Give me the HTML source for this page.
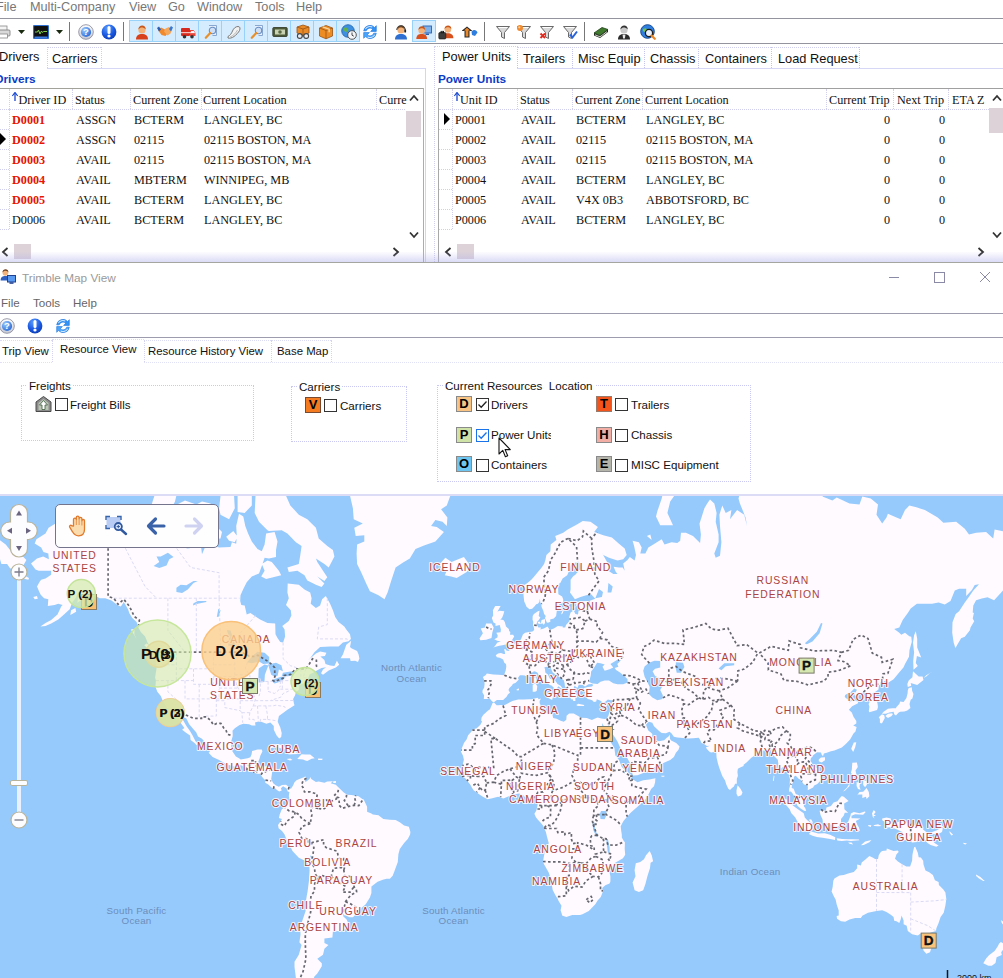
<!DOCTYPE html>
<html><head><meta charset="utf-8"><title>Trimble Map View</title>
<style>
html,body{margin:0;padding:0;background:#fff;}
#root{position:relative;width:1003px;height:978px;overflow:hidden;background:#fff;font-family:"Liberation Sans",sans-serif;}
.a{position:absolute;white-space:nowrap;}
.menu{font-size:12.7px;color:#777;line-height:16px;}
.tab{font-size:12.8px;color:#111;line-height:16px;}
.hl{position:absolute;background:#d4ecfd;border:1px solid #98d2fb;box-sizing:border-box;}
.sep{position:absolute;width:1px;background:#777;}
.hline{position:absolute;left:0;width:1003px;height:1px;background:#8c8c9c;}
.bl{font-size:11.8px;font-weight:bold;color:#0a3cc8;line-height:14px;}
.g{font-family:"Liberation Serif",serif;font-size:12.2px;color:#111;line-height:16px;}
.gr{font-family:"Liberation Serif",serif;font-size:12.2px;color:#e61400;font-weight:bold;line-height:16px;}
.s12{font-size:11.6px;color:#111;line-height:15px;}
.cb{position:absolute;width:13px;height:13px;box-sizing:border-box;border:1px solid #333;background:#fff;}
.ic{position:absolute;width:16px;height:16px;box-sizing:border-box;border:1px solid #777;font-weight:bold;font-size:13px;line-height:14px;text-align:center;color:#000;}
.gb{position:absolute;box-sizing:border-box;border:1px dotted #c8c8f2;}
.dv{position:absolute;width:0;border-left:1px dotted #d0d0ee;}
.dh{position:absolute;height:0;border-top:1px dotted #d0d0ee;}

</style></head>
<body>
<div id="root">
<div class="a menu" style="left:-4px;top:-1px">File</div>
<div class="a menu" style="left:30px;top:-1px">Multi-Company</div>
<div class="a menu" style="left:129px;top:-1px">View</div>
<div class="a menu" style="left:168px;top:-1px">Go</div>
<div class="a menu" style="left:197px;top:-1px">Window</div>
<div class="a menu" style="left:255px;top:-1px">Tools</div>
<div class="a menu" style="left:296px;top:-1px">Help</div>
<div class="hline" style="top:18px;background:#94949f"></div>
<div class="hline" style="top:43px;background:#94949f"></div>
<div class="hl" style="left:129px;top:20px;width:24px;height:22px"></div>
<div class="hl" style="left:152px;top:20px;width:24px;height:22px"></div>
<div class="hl" style="left:175px;top:20px;width:24px;height:22px"></div>
<div class="hl" style="left:198px;top:20px;width:24px;height:22px"></div>
<div class="hl" style="left:221px;top:20px;width:24px;height:22px"></div>
<div class="hl" style="left:244px;top:20px;width:24px;height:22px"></div>
<div class="hl" style="left:267px;top:20px;width:24px;height:22px"></div>
<div class="hl" style="left:290px;top:20px;width:24px;height:22px"></div>
<div class="hl" style="left:313px;top:20px;width:24px;height:22px"></div>
<div class="hl" style="left:336px;top:20px;width:24px;height:22px"></div>
<div class="hl" style="left:412px;top:20px;width:24px;height:22px"></div>
<div class="sep" style="left:69px;top:22px;height:19px"></div>
<div class="sep" style="left:123px;top:22px;height:19px"></div>
<div class="sep" style="left:385px;top:22px;height:19px"></div>
<div class="sep" style="left:484px;top:22px;height:19px"></div>
<div class="sep" style="left:584px;top:22px;height:19px"></div>
<svg class="a" style="left:-5.0px;top:23.5px" width="16" height="16" viewBox="0 0 16 16"><rect x="3" y="2" width="9" height="5" fill="#f4f4f4" stroke="#888" stroke-width="0.8"/><rect x="1" y="6" width="14" height="6" rx="1" fill="#d9d9d9" stroke="#777" stroke-width="0.8"/><rect x="3.500" y="10" width="9" height="4" fill="#fff" stroke="#888" stroke-width="0.8"/></svg>
<svg class="a" style="left:18.0px;top:30.0px" width="7" height="4" viewBox="0 0 7 4"><path d="M0 0h7l-3.500 4z" fill="#1a2a10"/></svg>
<svg class="a" style="left:33.0px;top:23.5px" width="16" height="16" viewBox="0 0 16 16"><rect x="0.500" y="1.500" width="15" height="13" rx="1" fill="#111" stroke="#2f6fd0" stroke-width="1.200"/><path d="M2 8h2.500l1-2 1.500 4 1.500-3 1 1.500 1.200-1h3.300" stroke="#7fd04a" stroke-width="1" fill="none"/><rect x="1.500" y="12.500" width="13" height="1.500" fill="#3b7be0"/></svg>
<svg class="a" style="left:56.0px;top:30.0px" width="7" height="4" viewBox="0 0 7 4"><path d="M0 0h7l-3.500 4z" fill="#1a2a10"/></svg>
<svg class="a" style="left:78.0px;top:23.5px" width="16" height="16" viewBox="0 0 16 16"><defs><radialGradient id="qg" cx="35%" cy="30%" r="75%"><stop offset="0" stop-color="#9ccbff"/><stop offset="1" stop-color="#2a6ad6"/></radialGradient><linearGradient id="qr" x1="0" y1="0" x2="0" y2="1"><stop offset="0" stop-color="#ffffff"/><stop offset="1" stop-color="#c4c8d4"/></linearGradient></defs><circle cx="8" cy="8" r="7.3" fill="url(#qr)" stroke="#8e90a0" stroke-width="0.9"/><circle cx="8" cy="8" r="5.1" fill="url(#qg)"/><text x="8" y="11.4" font-size="9.5" font-weight="bold" fill="#fff" text-anchor="middle" font-family="Liberation Sans, sans-serif">?</text></svg>
<svg class="a" style="left:101.0px;top:23.5px" width="16" height="16" viewBox="0 0 16 16"><defs><radialGradient id="bg" cx="40%" cy="25%" r="80%"><stop offset="0" stop-color="#5a9cff"/><stop offset="0.6" stop-color="#1a58e0"/><stop offset="1" stop-color="#0c3cb4"/></radialGradient></defs><circle cx="8" cy="8" r="7.4" fill="url(#bg)"/><path d="M8 3.6v4.8" stroke="#fff" stroke-width="3" stroke-linecap="round"/><circle cx="8" cy="12" r="1.6" fill="#fff"/></svg>
<svg class="a" style="left:133.5px;top:23.5px" width="16" height="16" viewBox="0 0 16 16"><path d="M2 15.5c0-4 2.5-5.5 6-5.5s6 1.5 6 5.5z" fill="#d8401c"/><circle cx="8" cy="6" r="3.6" fill="#f3b27a"/><path d="M4.3 5.6c.2-3 2-4.1 3.9-4.1s3.600 1.200 3.600 4.000c-1.200-1.600-3.000-2.000-4.000-2.000s-2.500.6-3.500 2.100z" fill="#c8571a"/></svg>
<svg class="a" style="left:156.5px;top:23.5px" width="16" height="16" viewBox="0 0 16 16"><path d="M1 6l3-2.500 4 2 2.500 4-2 2.500-4-1z" fill="#f08a2c"/><path d="M15 5.500l-3-2.500-3.500 1.500-1.500 3 3.500 4 3-2z" fill="#f6a85a"/><path d="M0 4l2-1.500 2 3-2 2z" fill="#2a5fb8"/><path d="M16 3.500l-2-1.500-2 3 2 2.500z" fill="#3a78d0"/></svg>
<svg class="a" style="left:179.5px;top:23.5px" width="16" height="16" viewBox="0 0 16 16"><rect x="1" y="4" width="9" height="8" rx="1" fill="#d62a1e"/><path d="M10 6h3.500l2 3v3h-5.500z" fill="#e8483a"/><rect x="11" y="7" width="3" height="2" fill="#dfefff"/><rect x="1" y="8" width="14" height="1.200" fill="#fff" opacity=".7"/><circle cx="4.500" cy="12.800" r="1.800" fill="#333"/><circle cx="12" cy="12.800" r="1.800" fill="#333"/></svg>
<svg class="a" style="left:202.5px;top:23.5px" width="16" height="16" viewBox="0 0 16 16"><path d="M6 1.500h7.500v10h-4" fill="#e8f0fb" stroke="#7f9fcc" stroke-width="0.9"/><circle cx="9.500" cy="6.500" r="3.200" fill="#cfe0f6" stroke="#6a8fc4" stroke-width="1.100"/><path d="M7.300 9l-4.500 4.800" stroke="#e8902c" stroke-width="2.200" stroke-linecap="round"/></svg>
<svg class="a" style="left:225.5px;top:23.5px" width="16" height="16" viewBox="0 0 16 16"><path d="M2 12.500c2-1 3.500-3 4.500-5.500s3-4.500 5.500-4.500c2 0 2.500 2 1.500 4s-3.500 4.500-5.500 6-4.500 2-6 1.500z" fill="#f2f2f2" stroke="#7a7a7a" stroke-width="1"/><path d="M4 13c3-1 6-4 7.500-7" stroke="#aaa" stroke-width="0.800" fill="none"/></svg>
<svg class="a" style="left:248.5px;top:23.5px" width="16" height="16" viewBox="0 0 16 16"><path d="M6 1.500h7.500v10h-4" fill="#e8f0fb" stroke="#7f9fcc" stroke-width="0.9"/><circle cx="9.500" cy="6.500" r="3.200" fill="#cfe0f6" stroke="#6a8fc4" stroke-width="1.100"/><path d="M7.300 9l-4.500 4.800" stroke="#e8902c" stroke-width="2.200" stroke-linecap="round"/></svg>
<svg class="a" style="left:271.5px;top:23.5px" width="16" height="16" viewBox="0 0 16 16"><rect x="0.800" y="3.500" width="14.400" height="9" rx="1" fill="#4d5a3a" stroke="#2d3422" stroke-width="0.800"/><rect x="3" y="5.500" width="10" height="5" fill="#c9d3b4"/><circle cx="8" cy="8" r="1.800" fill="#5c6b46"/></svg>
<svg class="a" style="left:294.5px;top:23.5px" width="16" height="16" viewBox="0 0 16 16"><path d="M2 3l6-2 6 2v6l-6 2.500-6-2.500z" fill="#e98a28" stroke="#9a5414" stroke-width="0.800"/><path d="M2 3l6 2 6-2M8 5v6.500" stroke="#9a5414" stroke-width="0.800" fill="none"/><circle cx="4.800" cy="12" r="2.400" fill="#e9eef5" stroke="#444" stroke-width="1.100"/><circle cx="11.200" cy="12" r="2.400" fill="#e9eef5" stroke="#444" stroke-width="1.100"/><path d="M7.200 12h1.600" stroke="#444" stroke-width="1"/></svg>
<svg class="a" style="left:317.5px;top:23.5px" width="16" height="16" viewBox="0 0 16 16"><path d="M1.500 4l6.500-2.500 6.500 2.500v8l-6.500 2.800-6.500-2.800z" fill="#ee8c24" stroke="#9a5414" stroke-width="0.800"/><path d="M1.500 4l6.500 2.500 6.500-2.500M8 6.500v8.300" stroke="#9a5414" stroke-width="0.800" fill="none"/><path d="M4.700 2.800l6.500 2.500v3" stroke="#f8d39a" stroke-width="1.400" fill="none"/></svg>
<svg class="a" style="left:340.5px;top:23.5px" width="16" height="16" viewBox="0 0 16 16"><circle cx="7" cy="7" r="6.300" fill="#3f8fe0" stroke="#1f5fae" stroke-width="0.800"/><path d="M3 4c2-1 3 0 4 1s-1 3-2 3-3-2-2-4zM8 9c1.500-1 3.500 0 3 2s-2.500 2-3 .5z" fill="#62b04a"/><circle cx="11" cy="11" r="4.300" fill="#f4f6fa" stroke="#555" stroke-width="1"/><path d="M11 8.500v2.700l1.800 1" stroke="#333" stroke-width="0.900" fill="none"/></svg>
<svg class="a" style="left:362.0px;top:23.5px" width="16" height="16" viewBox="0 0 16 16"><g transform="translate(8 8) scale(1.15) translate(-8 -8)"><path d="M2.500 7a5.500 5.500 0 0 1 9.500-3l1.500-1.500v5h-5l1.800-1.800a3.300 3.300 0 0 0-5.600 1.300z" fill="#2f92f6" stroke="#1b6fd8" stroke-width="0.5"/><path d="M13.500 9a5.500 5.500 0 0 1-9.500 3l-1.500 1.500v-5h5l-1.800 1.800a3.300 3.300 0 0 0 5.600-1.300z" fill="#4aa4fa" stroke="#1b6fd8" stroke-width="0.5"/><path d="M4 5.500a4.400 4.400 0 0 1 6-1.800" stroke="#cfe6ff" stroke-width="0.9" fill="none"/><path d="M12 10.500a4.400 4.400 0 0 1-6 1.800" stroke="#cfe6ff" stroke-width="0.9" fill="none"/></g></svg>
<svg class="a" style="left:393.0px;top:23.5px" width="16" height="16" viewBox="0 0 16 16"><path d="M2 15.5c0-4 2.5-5.5 6-5.5s6 1.5 6 5.5z" fill="#2f6fd2"/><circle cx="8" cy="6" r="3.6" fill="#f3b27a"/><path d="M4.3 5.6c.2-3 2-4.1 3.9-4.1s3.600 1.200 3.600 4.000c-1.200-1.600-3.000-2.000-4.000-2.000s-2.500.6-3.500 2.100z" fill="#7a4a22"/><path d="M3.800 6a4.200 4.200 0 0 1 8.400 0" stroke="#333" stroke-width="1.100" fill="none"/><rect x="11.300" y="5.500" width="1.800" height="3" rx=".6" fill="#222"/></svg>
<svg class="a" style="left:416.0px;top:23.5px" width="16" height="16" viewBox="0 0 16 16"><rect x="7" y="2" width="8.500" height="7" fill="#7fb1ea" stroke="#2b5fae" stroke-width="0.900"/><rect x="9.500" y="9.500" width="3.500" height="1.500" fill="#2b5fae"/><g transform="translate(-1.500,1) scale(.9)"><path d="M2 15.5c0-4 2.5-5.5 6-5.5s6 1.5 6 5.5z" fill="#d8501c"/><circle cx="8" cy="6" r="3.6" fill="#f3b27a"/><path d="M4.3 5.6c.2-3 2-4.1 3.9-4.1s3.600 1.200 3.600 4.000c-1.200-1.600-3.000-2.000-4.000-2.000s-2.500.6-3.500 2.100z" fill="#c8571a"/></g></svg>
<svg class="a" style="left:438.0px;top:23.5px" width="16" height="16" viewBox="0 0 16 16"><g transform="translate(2.500,0) scale(.92)"><path d="M2 15.5c0-4 2.5-5.5 6-5.5s6 1.5 6 5.5z" fill="#d8501c"/><circle cx="8" cy="6" r="3.6" fill="#f3b27a"/><path d="M4.3 5.6c.2-3 2-4.1 3.9-4.1s3.600 1.200 3.600 4.000c-1.200-1.600-3.000-2.000-4.000-2.000s-2.500.6-3.500 2.100z" fill="#c8571a"/></g><rect x="0.800" y="8.500" width="7" height="6.500" rx="1" fill="#3d3d3d" stroke="#111" stroke-width="0.600"/><rect x="3" y="7.300" width="2.600" height="1.500" fill="none" stroke="#111" stroke-width="0.800"/></svg>
<svg class="a" style="left:462.0px;top:23.5px" width="16" height="16" viewBox="0 0 16 16"><path d="M5 2.500l5.500 4.500h-3v6.500h-5v-6.500h-3z" fill="#2a2a2a"/><path d="M5 3.800l3 2.700h-1.600v6h-2.800v-6h-1.600z" fill="#e8882a"/><path d="M9.500 7.500c2-2.500 5-2 6 1l-2.500 3.500-3-1z" fill="#2f7fe0"/></svg>
<svg class="a" style="left:494.5px;top:23.5px" width="16" height="16" viewBox="0 0 16 16"><path d="M1.500 2.500h13l-5 6v6l-3-1.500v-4.500z" fill="#d8d8d8" stroke="#6a6a6a" stroke-width="1" stroke-linejoin="round"/><path d="M3.500 3.500h9" stroke="#fff" stroke-width="1"/></svg>
<svg class="a" style="left:516.0px;top:23.5px" width="16" height="16" viewBox="0 0 16 16"><path d="M1.500 2.500h13l-5 6v6l-3-1.500v-4.500z" fill="#d8d8d8" stroke="#6a6a6a" stroke-width="1" stroke-linejoin="round"/><path d="M3.500 3.500h9" stroke="#fff" stroke-width="1"/><circle cx="4" cy="4" r="3" fill="#f08a2c"/><circle cx="3.300" cy="3.300" r="1.100" fill="#fbd0a0"/></svg>
<svg class="a" style="left:539.0px;top:23.5px" width="16" height="16" viewBox="0 0 16 16"><path d="M1.500 2.500h13l-5 6v6l-3-1.500v-4.500z" fill="#d8d8d8" stroke="#6a6a6a" stroke-width="1" stroke-linejoin="round"/><path d="M3.500 3.500h9" stroke="#fff" stroke-width="1"/><path d="M1.500 9.500l4.500 4.500M6 9.500l-4.500 4.500" stroke="#e0281c" stroke-width="1.800"/></svg>
<svg class="a" style="left:562.0px;top:23.5px" width="16" height="16" viewBox="0 0 16 16"><path d="M1.500 2.500h13l-5 6v6l-3-1.500v-4.500z" fill="#d8d8d8" stroke="#6a6a6a" stroke-width="1" stroke-linejoin="round"/><path d="M3.500 3.500h9" stroke="#fff" stroke-width="1"/><path d="M8 10.500l2.500 3 4.500-6" stroke="#2a62d8" stroke-width="2" fill="none"/></svg>
<svg class="a" style="left:593.0px;top:23.5px" width="16" height="16" viewBox="0 0 16 16"><path d="M1 9l8-5.500 6 2-8 6z" fill="#3f7a2e" stroke="#1f3f18" stroke-width="0.800"/><path d="M1 9v2.500l6 2.500 8-6v-2.500l-8 6z" fill="#1e2a1a"/><path d="M2 10.800l5 2 7-5.200" stroke="#e8e8e0" stroke-width="0.900" fill="none"/></svg>
<svg class="a" style="left:616.0px;top:23.5px" width="16" height="16" viewBox="0 0 16 16"><path d="M2 15.5c0-4 2.5-5.5 6-5.5s6 1.5 6 5.5z" fill="#2b2b2b"/><circle cx="8" cy="6" r="3.6" fill="#c9c9c9"/><path d="M4.3 5.6c.2-3 2-4.1 3.9-4.1s3.600 1.200 3.600 4.000c-1.200-1.600-3.000-2.000-4.000-2.000s-2.500.6-3.500 2.100z" fill="#333"/><path d="M6.500 10.500h3l-.6 4h-1.800z" fill="#e8e8e8"/></svg>
<svg class="a" style="left:640.0px;top:23.5px" width="16" height="16" viewBox="0 0 16 16"><circle cx="7.500" cy="7.500" r="6.800" fill="#2f7fe0" stroke="#17498f" stroke-width="1"/><path d="M3 5c2-1.500 3.500-.5 4 .5s-1 2.500-2 2.500-3-1-2-3z" fill="#6ec05a"/><circle cx="9" cy="9" r="3.600" fill="#eaf3ff" stroke="#1a1a1a" stroke-width="1.300"/><path d="M11.600 11.600l3.200 3.200" stroke="#e8882a" stroke-width="2.200" stroke-linecap="round"/></svg>
<div class="a tab" style="left:-1px;top:49px">Drivers</div>
<div class="a tab" style="left:52px;top:51px">Carriers</div>
<div class="dv" style="left:47px;top:47px;height:21px"></div>
<div class="dh" style="left:47px;top:47px;width:54px"></div>
<div class="dv" style="left:101px;top:47px;height:21px"></div>
<div class="a" style="left:47px;top:68px;width:378px;height:1px;background:#d6d6f6"></div>
<div class="a" style="left:425px;top:68px;width:1px;height:194px;background:#d4d4fa"></div>
<div class="a bl" style="left:-5px;top:72px">Drivers</div>
<div class="dv" style="left:434px;top:46px;height:216px"></div>
<div class="dh" style="left:435px;top:46px;width:83px"></div>
<div class="a tab" style="left:442px;top:49px">Power Units</div>
<div class="a tab" style="left:523px;top:51px">Trailers</div>
<div class="a tab" style="left:578px;top:51px">Misc Equip</div>
<div class="a tab" style="left:650px;top:51px">Chassis</div>
<div class="a tab" style="left:705px;top:51px">Containers</div>
<div class="a tab" style="left:778px;top:51px">Load Request</div>
<div class="dv" style="left:517px;top:47px;height:21px;border-color:#c4c4ec"></div>
<div class="dv" style="left:572px;top:47px;height:21px;border-color:#c4c4ec"></div>
<div class="dv" style="left:644px;top:47px;height:21px;border-color:#c4c4ec"></div>
<div class="dv" style="left:698px;top:47px;height:21px;border-color:#c4c4ec"></div>
<div class="dv" style="left:771px;top:47px;height:21px;border-color:#c4c4ec"></div>
<div class="dv" style="left:859px;top:47px;height:21px;border-color:#c4c4ec"></div>
<div class="dh" style="left:517px;top:47px;width:342px"></div>
<div class="a" style="left:517px;top:68px;width:486px;height:1px;background:#d6d6f6"></div>
<div class="a bl" style="left:438px;top:72px">Power Units</div>
<div class="a" style="left:0;top:88px;width:424px;height:1px;background:#a2a29a"></div>
<div class="a" style="left:423px;top:88px;width:1px;height:174px;background:#aeae9e"></div>
<div class="dh" style="left:0;top:109px;width:405px"></div>
<div class="dv" style="left:9px;top:89px;height:20px"></div>
<div class="dv" style="left:72px;top:89px;height:20px"></div>
<div class="dv" style="left:130px;top:89px;height:20px"></div>
<div class="dv" style="left:201px;top:89px;height:20px"></div>
<div class="dv" style="left:376px;top:89px;height:20px"></div>
<div class="dv" style="left:9px;top:109px;height:120px"></div>
<div class="dh" style="left:0;top:129px;width:9px"></div>
<div class="dh" style="left:0;top:149px;width:9px"></div>
<div class="dh" style="left:0;top:169px;width:9px"></div>
<div class="dh" style="left:0;top:189px;width:9px"></div>
<div class="dh" style="left:0;top:209px;width:9px"></div>
<div class="dh" style="left:0;top:229px;width:9px"></div>
<svg class="a" style="left:12px;top:92px" width="6" height="9"><path d="M3 1V9" stroke="#1846d0" stroke-width="1.3"/><path d="M0.300 4L3 0.500L5.700 4" stroke="#1846d0" stroke-width="1.200" fill="none"/></svg>
<div class="a g" style="left:18.5px;top:92px">Driver ID</div>
<div class="a g" style="left:75px;top:92px">Status</div>
<div class="a g" style="left:133px;top:92px">Current Zone</div>
<div class="a g" style="left:203px;top:92px">Current Location</div>
<div class="a g" style="left:379px;top:92px">Curre</div>
<div class="a gr" style="left:12px;top:112px">D0001</div>
<div class="a g" style="left:76px;top:112px">ASSGN</div>
<div class="a g" style="left:134px;top:112px">BCTERM</div>
<div class="a g" style="left:204px;top:112px">LANGLEY, BC</div>
<div class="a gr" style="left:12px;top:132px">D0002</div>
<div class="a g" style="left:76px;top:132px">ASSGN</div>
<div class="a g" style="left:134px;top:132px">02115</div>
<div class="a g" style="left:204px;top:132px">02115 BOSTON, MA</div>
<div class="a gr" style="left:12px;top:152px">D0003</div>
<div class="a g" style="left:76px;top:152px">AVAIL</div>
<div class="a g" style="left:134px;top:152px">02115</div>
<div class="a g" style="left:204px;top:152px">02115 BOSTON, MA</div>
<div class="a gr" style="left:12px;top:172px">D0004</div>
<div class="a g" style="left:76px;top:172px">AVAIL</div>
<div class="a g" style="left:134px;top:172px">MBTERM</div>
<div class="a g" style="left:204px;top:172px">WINNIPEG, MB</div>
<div class="a gr" style="left:12px;top:192px">D0005</div>
<div class="a g" style="left:76px;top:192px">AVAIL</div>
<div class="a g" style="left:134px;top:192px">BCTERM</div>
<div class="a g" style="left:204px;top:192px">LANGLEY, BC</div>
<div class="a g" style="left:12px;top:212px">D0006</div>
<div class="a g" style="left:76px;top:212px">AVAIL</div>
<div class="a g" style="left:134px;top:212px">BCTERM</div>
<div class="a g" style="left:204px;top:212px">LANGLEY, BC</div>
<svg class="a" style="left:0;top:133px" width="6" height="12"><path d="M0 0L6 6L0 12Z" fill="#000"/></svg>
<div class="a" style="left:406px;top:111px;width:15px;height:26px;background:#ddd2d8"></div>
<svg class="a" style="left:409px;top:94px" width="10" height="8"><path d="M1 6.5L5 2L9 6.5" stroke="#333" stroke-width="1.8" fill="none"/></svg>
<svg class="a" style="left:409px;top:231px" width="10" height="8"><path d="M1 1.5L5 6L9 1.5" stroke="#333" stroke-width="1.8" fill="none"/></svg>
<div class="a" style="left:14px;top:244px;width:17px;height:15px;background:#ddd2d8"></div>
<svg class="a" style="left:1px;top:247px" width="8" height="10"><path d="M6.5 1L2 5L6.5 9" stroke="#333" stroke-width="1.8" fill="none"/></svg>
<svg class="a" style="left:392px;top:247px" width="8" height="10"><path d="M1.5 1L6 5L1.5 9" stroke="#333" stroke-width="1.8" fill="none"/></svg>
<div class="a" style="left:438px;top:88px;width:565px;height:1px;background:#a0a0a0"></div>
<div class="a" style="left:438px;top:88px;width:1px;height:174px;background:#a8a8a8"></div>
<div class="dh" style="left:439px;top:109px;width:550px"></div>
<div class="dv" style="left:452px;top:89px;height:20px"></div>
<div class="dv" style="left:517px;top:89px;height:20px"></div>
<div class="dv" style="left:572px;top:89px;height:20px"></div>
<div class="dv" style="left:642px;top:89px;height:20px"></div>
<div class="dv" style="left:826px;top:89px;height:20px"></div>
<div class="dv" style="left:893px;top:89px;height:20px"></div>
<div class="dv" style="left:948px;top:89px;height:20px"></div>
<div class="dv" style="left:452px;top:109px;height:120px"></div>
<div class="dh" style="left:439px;top:129px;width:13px"></div>
<div class="dh" style="left:439px;top:149px;width:13px"></div>
<div class="dh" style="left:439px;top:169px;width:13px"></div>
<div class="dh" style="left:439px;top:189px;width:13px"></div>
<div class="dh" style="left:439px;top:209px;width:13px"></div>
<div class="dh" style="left:439px;top:229px;width:13px"></div>
<svg class="a" style="left:454px;top:92px" width="6" height="9"><path d="M3 1V9" stroke="#1846d0" stroke-width="1.3"/><path d="M0.300 4L3 0.500L5.700 4" stroke="#1846d0" stroke-width="1.200" fill="none"/></svg>
<div class="a g" style="left:460px;top:92px">Unit ID</div>
<div class="a g" style="left:520px;top:92px">Status</div>
<div class="a g" style="left:575px;top:92px">Current Zone</div>
<div class="a g" style="left:645px;top:92px">Current Location</div>
<div class="a g" style="left:829px;top:92px">Current Trip</div>
<div class="a g" style="left:897px;top:92px">Next Trip</div>
<div class="a g" style="left:952px;top:92px">ETA Z</div>
<div class="a g" style="left:455px;top:112px">P0001</div>
<div class="a g" style="left:521px;top:112px">AVAIL</div>
<div class="a g" style="left:576px;top:112px">BCTERM</div>
<div class="a g" style="left:646px;top:112px">LANGLEY, BC</div>
<div class="a g" style="left:884px;top:112px">0</div>
<div class="a g" style="left:939px;top:112px">0</div>
<div class="a g" style="left:455px;top:132px">P0002</div>
<div class="a g" style="left:521px;top:132px">AVAIL</div>
<div class="a g" style="left:576px;top:132px">02115</div>
<div class="a g" style="left:646px;top:132px">02115 BOSTON, MA</div>
<div class="a g" style="left:884px;top:132px">0</div>
<div class="a g" style="left:939px;top:132px">0</div>
<div class="a g" style="left:455px;top:152px">P0003</div>
<div class="a g" style="left:521px;top:152px">AVAIL</div>
<div class="a g" style="left:576px;top:152px">02115</div>
<div class="a g" style="left:646px;top:152px">02115 BOSTON, MA</div>
<div class="a g" style="left:884px;top:152px">0</div>
<div class="a g" style="left:939px;top:152px">0</div>
<div class="a g" style="left:455px;top:172px">P0004</div>
<div class="a g" style="left:521px;top:172px">AVAIL</div>
<div class="a g" style="left:576px;top:172px">BCTERM</div>
<div class="a g" style="left:646px;top:172px">LANGLEY, BC</div>
<div class="a g" style="left:884px;top:172px">0</div>
<div class="a g" style="left:939px;top:172px">0</div>
<div class="a g" style="left:455px;top:192px">P0005</div>
<div class="a g" style="left:521px;top:192px">AVAIL</div>
<div class="a g" style="left:576px;top:192px">V4X 0B3</div>
<div class="a g" style="left:646px;top:192px">ABBOTSFORD, BC</div>
<div class="a g" style="left:884px;top:192px">0</div>
<div class="a g" style="left:939px;top:192px">0</div>
<div class="a g" style="left:455px;top:212px">P0006</div>
<div class="a g" style="left:521px;top:212px">AVAIL</div>
<div class="a g" style="left:576px;top:212px">BCTERM</div>
<div class="a g" style="left:646px;top:212px">LANGLEY, BC</div>
<div class="a g" style="left:884px;top:212px">0</div>
<div class="a g" style="left:939px;top:212px">0</div>
<svg class="a" style="left:444px;top:113px" width="6" height="12"><path d="M0 0L6 6L0 12Z" fill="#000"/></svg>
<div class="a" style="left:989px;top:108px;width:14px;height:25px;background:#ddd2d8"></div>
<svg class="a" style="left:992px;top:94px" width="10" height="8"><path d="M1 6.5L5 2L9 6.5" stroke="#333" stroke-width="1.8" fill="none"/></svg>
<svg class="a" style="left:992px;top:231px" width="10" height="8"><path d="M1 1.5L5 6L9 1.5" stroke="#333" stroke-width="1.8" fill="none"/></svg>
<div class="a" style="left:457px;top:244px;width:17px;height:15px;background:#ddd2d8"></div>
<svg class="a" style="left:444px;top:247px" width="8" height="10"><path d="M6.5 1L2 5L6.5 9" stroke="#333" stroke-width="1.8" fill="none"/></svg>
<svg class="a" style="left:977px;top:247px" width="8" height="10"><path d="M1.5 1L6 5L1.5 9" stroke="#333" stroke-width="1.8" fill="none"/></svg>
<div class="a" style="left:0;top:252px;width:1003px;height:10px;background:linear-gradient(rgba(190,190,250,0.04),rgba(170,170,235,0.42))"></div>
<div class="hline" style="top:262px;background:#a6a6a0"></div>
<div class="a" style="left:22px;top:270px;font-size:11.8px;color:#9a9a9a;line-height:16px">Trimble Map View</div>
<svg class="a" style="left:885px;top:268px" width="110" height="18"><g stroke="#8a8aa6" stroke-width="1" fill="none"><path d="M4 9.5H14"/><rect x="49.5" y="4.5" width="10" height="10"/><path d="M95 4L105 14M105 4L95 14"/></g></svg>
<div class="a" style="left:1px;top:295px;font-size:11.6px;color:#666;line-height:15px">File</div>
<div class="a" style="left:33px;top:295px;font-size:11.6px;color:#666;line-height:15px">Tools</div>
<div class="a" style="left:73px;top:295px;font-size:11.6px;color:#666;line-height:15px">Help</div>
<div class="hline" style="top:313px;background:#9c9cae"></div>
<div class="hline" style="top:337px;background:#9c9cae"></div>
<svg class="a" style="left:-1.5px;top:318.0px" width="16" height="16" viewBox="0 0 16 16"><defs><radialGradient id="qg" cx="35%" cy="30%" r="75%"><stop offset="0" stop-color="#9ccbff"/><stop offset="1" stop-color="#2a6ad6"/></radialGradient><linearGradient id="qr" x1="0" y1="0" x2="0" y2="1"><stop offset="0" stop-color="#ffffff"/><stop offset="1" stop-color="#c4c8d4"/></linearGradient></defs><circle cx="8" cy="8" r="7.3" fill="url(#qr)" stroke="#8e90a0" stroke-width="0.9"/><circle cx="8" cy="8" r="5.1" fill="url(#qg)"/><text x="8" y="11.4" font-size="9.5" font-weight="bold" fill="#fff" text-anchor="middle" font-family="Liberation Sans, sans-serif">?</text></svg>
<svg class="a" style="left:27.0px;top:318.0px" width="16" height="16" viewBox="0 0 16 16"><defs><radialGradient id="bg" cx="40%" cy="25%" r="80%"><stop offset="0" stop-color="#5a9cff"/><stop offset="0.6" stop-color="#1a58e0"/><stop offset="1" stop-color="#0c3cb4"/></radialGradient></defs><circle cx="8" cy="8" r="7.4" fill="url(#bg)"/><path d="M8 3.6v4.8" stroke="#fff" stroke-width="3" stroke-linecap="round"/><circle cx="8" cy="12" r="1.6" fill="#fff"/></svg>
<svg class="a" style="left:55.0px;top:318.0px" width="16" height="16" viewBox="0 0 16 16"><g transform="translate(8 8) scale(1.15) translate(-8 -8)"><path d="M2.500 7a5.500 5.500 0 0 1 9.500-3l1.500-1.500v5h-5l1.800-1.800a3.300 3.300 0 0 0-5.600 1.300z" fill="#2f92f6" stroke="#1b6fd8" stroke-width="0.5"/><path d="M13.500 9a5.500 5.500 0 0 1-9.500 3l-1.500 1.500v-5h5l-1.800 1.800a3.300 3.300 0 0 0 5.600-1.300z" fill="#4aa4fa" stroke="#1b6fd8" stroke-width="0.5"/><path d="M4 5.500a4.400 4.400 0 0 1 6-1.800" stroke="#cfe6ff" stroke-width="0.9" fill="none"/><path d="M12 10.500a4.400 4.400 0 0 1-6 1.800" stroke="#cfe6ff" stroke-width="0.9" fill="none"/></g></svg>
<svg class="a" style="left:0.0px;top:269.0px" width="16" height="16" viewBox="0 0 16 16"><g transform="translate(-1,-1) scale(.8)"><path d="M2 15.5c0-4 2.5-5.5 6-5.5s6 1.5 6 5.5z" fill="#2f5fc0"/><circle cx="8" cy="6" r="3.6" fill="#f3b27a"/><path d="M4.3 5.6c.2-3 2-4.1 3.9-4.1s3.600 1.200 3.600 4.000c-1.200-1.600-3.000-2.000-4.000-2.000s-2.500.6-3.500 2.100z" fill="#6a3a1a"/></g><rect x="7.500" y="6.500" width="8" height="6.500" fill="#5a9af0" stroke="#1f3f8f" stroke-width="1"/><rect x="9.500" y="13.300" width="4" height="1.500" fill="#1f3f8f"/></svg>
<svg class="a" style="left:498px;top:437px" width="14" height="22" viewBox="0 0 14 22"><path d="M1 1v16l3.800-3.600 2.600 6.300 2.300-1-2.600-6.100h5.200z" fill="#fff" stroke="#111" stroke-width="1.100" stroke-linejoin="round"/></svg>
<div class="a" style="left:2px;top:344px;font-size:11.4px;color:#111;line-height:15px">Trip View</div>
<div class="a" style="left:60px;top:342px;font-size:11.4px;color:#111;line-height:15px">Resource View</div>
<div class="a" style="left:148px;top:344px;font-size:11.4px;color:#111;line-height:15px">Resource History View</div>
<div class="a" style="left:277px;top:344px;font-size:11.4px;color:#111;line-height:15px">Base Map</div>
<div class="dh" style="left:0;top:340px;width:52px;border-color:#dcdcf4"></div>
<div class="dh" style="left:52px;top:339px;width:92px;border-color:#dcdcf4"></div>
<div class="dh" style="left:144px;top:340px;width:187px;border-color:#dcdcf4"></div>
<div class="dv" style="left:52px;top:340px;height:22px;border-color:#d4d4f0"></div>
<div class="dv" style="left:144px;top:340px;height:22px;border-color:#d4d4f0"></div>
<div class="dv" style="left:271px;top:340px;height:22px;border-color:#d4d4f0"></div>
<div class="dv" style="left:331px;top:340px;height:22px;border-color:#d4d4f0"></div>
<div class="dh" style="left:0;top:362px;width:52px;border-color:#e0e0f6"></div>
<div class="dh" style="left:144px;top:362px;width:859px;border-color:#e0e0f6"></div>
<div class="gb" style="left:21px;top:385px;width:233px;height:56px"></div>
<div class="a s12" style="left:27px;top:378px;background:#fff;padding:0 2px">Freights</div>
<div class="gb" style="left:291px;top:386px;width:116px;height:56px"></div>
<div class="a s12" style="left:297px;top:379px;background:#fff;padding:0 2px">Carriers</div>
<div class="gb" style="left:437px;top:385px;width:314px;height:97px"></div>
<div class="a s12" style="left:443px;top:378px;background:#fff;padding:0 2px">Current Resources&nbsp; Location</div>
<svg class="a" style="left:35px;top:396px" width="17" height="16"><path d="M1 6L8.5 0.5L16 6V15.5H1Z" fill="#8c8c8c" stroke="#4a4a4a" stroke-width="1"/><path d="M3.5 7L8.5 3L13.5 7V14H3.5Z" fill="#b9c6b4"/><path d="M8.5 4.5L12.5 9H10V13.5H7V9H4.5Z" fill="#fff" stroke="#3c5a3c" stroke-width="0.8"/></svg>
<div class="cb" style="left:55px;top:398px"></div>
<div class="a s12" style="left:70px;top:397px">Freight Bills</div>
<div class="ic" style="left:305px;top:397px;background:#f47b20;border-color:#7a4a30">V</div>
<div class="cb" style="left:324px;top:399px"></div>
<div class="a s12" style="left:340px;top:398px">Carriers</div>
<div class="ic" style="left:456px;top:396px;background:#f9c384;border-color:#8a8a8a">D</div>
<div class="cb" style="left:476px;top:398px"></div><svg class="a" style="left:476px;top:398px" width="13" height="13"><path d="M2.5 6.5L5.2 9.3L10.5 3.5" stroke="#222" stroke-width="1.3" fill="none"/></svg>
<div class="a s12" style="left:491px;top:397px">Drivers</div>
<div class="ic" style="left:456px;top:427px;background:#cfe3a8;border-color:#8a8a8a">P</div>
<div class="cb" style="left:476px;top:429px;border-color:#1a73e8"></div><svg class="a" style="left:476px;top:429px" width="13" height="13"><path d="M2.5 6.5L5.2 9.3L10.5 3.5" stroke="#1a73e8" stroke-width="1.3" fill="none"/></svg>
<div class="a s12" style="left:491px;top:427px;width:60px;overflow:hidden">Power Units</div>
<div class="ic" style="left:456px;top:456px;background:#6ec6f0;border-color:#8a8a8a">O</div>
<div class="cb" style="left:476px;top:459px"></div>
<div class="a s12" style="left:491px;top:457px">Containers</div>
<div class="ic" style="left:596px;top:396px;background:#f2541b;border-color:#9a7a6a">T</div>
<div class="cb" style="left:615px;top:398px"></div>
<div class="a s12" style="left:631px;top:397px">Trailers</div>
<div class="ic" style="left:596px;top:427px;background:#f2aea4;border-color:#8a8a8a">H</div>
<div class="cb" style="left:615px;top:429px"></div>
<div class="a s12" style="left:631px;top:427px">Chassis</div>
<div class="ic" style="left:596px;top:456px;background:#b4b4aa;border-color:#8a8a8a">E</div>
<div class="cb" style="left:615px;top:459px"></div>
<div class="a s12" style="left:631px;top:457px">MISC Equipment</div>
<!--CURSOR-->
<div class="a" style="left:0;top:494px;width:1003px;height:2px;background:#dcdcf6"></div>
<svg class="a" style="left:0;top:496px" width="1003" height="482" viewBox="0 0 1003 482">
<rect width="1003" height="482" fill="#96cafc"/>
<path d="M31.0 67.4L37.0 62.5L43.2 60.4L48.9 63.2L48.3 57.5L43.5 56.1L41.2 51.6L34.7 47.5L36.4 43.2L45.5 37.6L48.6 31.8L64.0 22.3L76.8 27.6L88.2 31.0L102.4 33.5L108.1 37.2L120.9 43.2L128.0 38.4L130.9 38.8L140.8 34.3L145.1 30.1L153.6 38.4L159.3 36.0L165.0 36.0L176.4 43.2L182.1 51.3L187.8 52.4L196.3 50.9L200.6 47.1L202.0 58.2L204.9 51.6L207.7 44.0L213.4 50.1L219.1 51.6L230.5 50.9L231.9 46.3L236.2 47.8L236.8 40.0L236.2 30.1L239.0 17.8L243.3 20.5L245.3 30.1L248.1 37.6L251.8 45.5L257.5 53.1L261.8 55.3L264.6 48.6L266.1 37.6L274.6 36.0L277.5 45.5L276.0 53.9L276.0 61.1L268.9 62.5L264.6 61.8L261.8 70.1L259.0 77.4L251.8 80.6L246.7 86.2L243.3 92.9L240.5 99.3L240.2 105.0L241.3 108.9L244.7 109.4L246.7 118.5L250.4 116.9L260.1 123.6L267.5 127.1L275.2 127.6L275.5 138.2L277.5 141.9L280.3 146.1L283.1 146.5L285.1 140.6L284.6 133.5L282.3 130.1L288.8 125.1L291.4 119.5L290.8 114.3L286.0 108.9L288.8 102.2L287.4 96.4L287.7 87.5L298.8 88.7L304.5 93.5L310.2 96.4L311.6 102.2L310.7 107.8L315.9 112.1L320.1 109.4L322.1 103.3L325.8 99.9L330.1 107.8L332.9 114.3L335.2 121.0L338.6 126.1L344.3 130.5L346.3 133.5L350.0 138.2L350.9 142.9L348.6 145.2L342.9 146.5L338.6 150.5L330.1 150.5L320.1 151.0L314.4 156.2L310.2 162.2L307.3 165.1L311.6 161.3L315.9 157.5L320.1 155.4L326.4 156.7L325.0 160.1L320.4 160.5L324.4 163.9L325.5 168.0L330.1 169.6L334.4 170.0L336.9 164.7L339.2 168.8L335.8 171.6L328.7 174.4L323.0 178.8L321.0 177.2L323.0 173.6L326.1 171.2L321.6 172.0L318.7 173.6L313.0 176.8L309.6 178.4L308.2 181.9L307.6 183.4L310.2 185.3L307.3 186.5L303.1 187.6L298.8 189.5L298.8 193.9L295.9 196.1L295.1 199.3L293.1 202.9L294.0 207.8L294.5 209.2L291.4 211.3L287.4 213.7L282.0 217.8L278.9 220.1L277.7 225.7L280.3 231.6L281.7 237.0L281.2 241.1L279.2 242.4L276.6 239.5L273.8 233.8L273.8 230.0L270.3 226.4L266.4 227.7L261.2 225.7L257.5 225.7L255.0 226.4L255.5 229.6L251.8 229.6L249.0 228.3L243.3 227.7L239.6 229.0L234.8 232.2L232.5 234.8L232.8 239.8L231.1 245.8L231.1 251.0L232.5 255.6L235.9 260.4L239.0 262.2L240.7 263.4L247.6 262.2L250.4 261.3L251.6 258.3L252.1 255.0L257.5 253.5L261.8 253.5L262.4 255.6L260.4 259.5L259.5 262.8L258.4 265.5L256.7 270.2L260.4 270.5L264.6 270.2L270.3 270.5L272.6 272.8L271.8 278.7L271.2 283.0L273.2 287.3L276.0 289.6L278.9 290.8L282.0 289.1L286.0 288.8L289.1 291.1L287.7 295.4L286.6 292.5L283.1 290.2L280.9 292.2L281.7 294.5L279.2 295.4L276.9 293.9L275.5 292.5L273.5 293.1L271.5 291.6L268.3 288.5L265.2 286.8L265.5 284.5L263.2 282.2L260.7 279.0L259.8 278.1L256.1 277.5L253.3 276.3L249.0 275.8L244.7 271.4L241.9 269.6L239.0 269.3L234.8 270.8L230.5 269.6L225.1 267.5L219.1 264.0L212.6 261.0L208.6 256.8L209.7 255.9L209.7 253.5L206.6 248.3L202.0 242.7L198.0 240.5L196.3 236.4L193.5 233.2L189.2 228.3L186.4 222.4L182.7 220.8L182.7 223.4L186.4 230.0L189.8 234.8L192.6 239.5L195.5 245.2L198.0 247.6L196.6 249.2L194.6 247.0L190.6 243.9L190.1 239.5L186.4 237.0L182.1 233.8L184.4 231.9L179.8 225.7L177.6 220.8L175.8 217.8L172.4 213.7L166.5 211.6L162.5 204.3L160.8 200.1L157.3 195.7L155.4 190.6L155.9 184.6L155.1 181.5L156.5 172.8L156.5 168.0L154.5 158.8L159.3 159.7L160.8 162.6L161.0 158.4L158.8 154.9L154.2 151.9L148.0 147.4L145.1 140.6L140.8 135.9L138.6 132.0L136.6 126.1L132.3 122.1L129.5 117.4L128.0 113.2L123.8 106.1L120.9 110.5L118.1 109.4L111.5 104.4L105.3 102.2L99.6 102.2L94.7 99.3L91.0 96.4L86.8 99.3L84.2 102.2L77.4 106.7L78.2 99.3L82.5 95.3L78.2 96.4L75.4 102.2L72.5 106.1L69.7 113.2L64.0 118.5L58.3 123.6L51.2 127.6L45.5 130.1L40.4 130.5L45.5 127.1L51.2 124.1L54.0 121.5L57.5 118.5L61.2 110.5L62.6 108.9L58.3 107.8L54.6 108.9L47.8 110.0L48.3 103.3L44.1 102.2L40.7 98.8L39.0 95.3L37.0 90.5L39.8 85.6L41.2 83.8L45.5 82.5L51.2 78.7L51.2 74.8L46.9 74.8L38.7 74.8L35.5 73.5ZM289.1 291.1L290.8 293.1L293.1 289.4L294.5 286.2L296.5 284.2L298.2 283.6L304.5 281.0L305.3 280.3L306.5 282.4L304.8 284.5L305.6 285.9L307.3 284.8L309.6 283.0L310.2 281.0L311.3 283.0L315.9 285.9L318.7 285.6L324.4 286.8L327.3 285.6L332.9 285.3L330.7 287.3L335.8 288.8L338.6 291.6L343.8 296.5L347.2 298.8L351.4 299.1L358.6 300.2L362.3 303.0L363.7 303.6L367.1 310.7L367.1 315.8L371.4 317.5L372.8 318.6L378.5 319.2L383.3 322.9L389.9 323.7L395.6 324.0L399.8 326.3L404.1 329.4L408.9 330.8L410.4 336.0L410.1 338.5L407.8 343.1L404.1 347.1L399.8 352.9L398.4 358.2L397.8 366.1L394.7 374.5L392.7 379.7L389.9 382.7L386.5 382.7L382.8 383.7L377.6 385.8L371.4 390.5L371.4 397.1L369.9 401.6L365.7 408.2L361.1 412.2L357.1 417.2L352.9 421.3L349.5 421.3L345.8 419.6L343.2 418.9L343.2 420.3L346.6 423.4L348.0 426.6L345.8 432.3L341.5 434.8L332.9 435.5L332.4 441.4L324.4 442.5L324.4 447.0L328.4 449.0L324.4 452.8L323.0 458.8L317.3 462.8L321.8 467.3L321.8 470.3L317.3 477.5L314.4 480.6L313.0 484.2L313.0 488.7L295.9 488.7L295.9 481.9L294.5 471.1L294.5 465.7L298.8 458.8L301.6 449.0L299.4 446.3L300.5 438.8L300.2 429.4L301.4 427.6L305.6 414.9L305.9 404.9L306.5 401.6L307.6 395.2L309.0 384.6L309.6 374.2L309.3 369.1L306.5 366.4L304.5 364.6L298.8 361.7L292.5 355.0L290.0 350.0L285.7 341.4L284.6 338.5L282.0 335.1L278.6 332.2L278.0 329.1L280.3 325.7L282.0 322.9L278.9 322.0L279.7 318.6L280.3 316.9L281.7 313.5L285.1 310.7L290.0 304.8L288.8 300.2L289.4 295.9L287.7 295.4ZM348.6 -13.1L344.3 -7.7L350.0 -0.4L352.9 12.3L353.7 23.2L362.8 27.6L354.3 31.8L355.7 40.0L364.3 39.2L364.3 45.5L357.1 48.6L356.6 57.5L357.1 68.1L361.4 76.7L366.2 87.5L369.9 95.3L378.5 99.3L384.5 103.3L387.6 96.4L391.3 84.4L395.6 71.5L402.7 66.7L409.8 62.5L415.5 53.1L424.0 49.4L435.4 45.5L443.9 36.0L436.8 31.0L431.1 30.1L435.4 24.1L442.5 25.8L446.8 30.1L447.4 21.4L441.1 13.2L446.8 9.4L451.1 -2.5L455.3 -13.1L348.6 -13.1ZM439.7 68.1L445.4 61.8L451.6 66.0L458.2 63.2L463.9 61.1L468.1 66.7L470.7 71.5L466.7 76.1L456.7 81.9L451.1 80.6L444.8 79.3L446.8 74.8L441.1 72.1ZM157.9 158.8L152.2 156.7L144.3 149.2L146.5 147.6L153.1 151.0L157.1 155.4ZM136.6 142.9L130.9 133.5L134.6 133.0L134.3 138.2ZM70.3 119.0L76.2 115.8L75.4 112.1L71.1 114.3ZM33.3 101.1L37.0 99.9L37.8 102.8L34.7 103.3ZM20.7 81.9L28.4 83.8L29.0 81.9L24.2 79.6ZM340.6 162.2L342.9 158.4L346.3 148.8L351.2 144.7L350.0 151.0L351.4 152.3L357.1 154.9L358.6 158.4L359.4 162.6L358.0 165.9L355.1 164.7L350.6 165.1L350.0 162.2ZM267.5 252.2L270.3 249.5L274.6 248.3L280.3 248.6L284.6 250.7L288.8 252.8L294.0 255.3L298.2 257.4L297.4 258.1L288.3 258.4L289.7 256.2L286.0 253.5L280.3 252.2L276.0 250.4L271.8 251.9L268.9 252.5ZM297.4 262.8L301.6 258.3L305.3 258.6L310.2 258.6L314.7 262.2L311.6 262.8L307.3 264.9L305.3 264.6L303.1 263.4L297.7 263.1ZM286.6 263.1L290.3 262.5L292.5 264.0L289.7 264.6ZM318.1 262.5L322.7 262.8L322.1 264.0L318.1 264.0ZM333.2 285.3L336.1 285.0L335.8 287.1L333.2 287.1ZM153.6 17.8L150.8 11.3L155.1 -2.5L159.3 -13.1L179.3 -13.1L175.0 5.5L169.3 16.9L165.0 22.3L159.3 25.0ZM176.4 30.1L173.6 21.4L175.0 9.4L185.0 4.6L196.3 8.5L202.0 5.5L210.6 7.5L210.6 14.1L212.0 25.8L222.0 36.0L220.5 42.4L210.6 43.2L202.0 44.8L187.8 46.3L179.3 40.8L175.0 32.7ZM226.2 40.8L233.3 35.1L237.6 40.8L234.8 46.3L229.1 44.8ZM219.1 12.3L222.0 -13.1L233.3 -13.1L234.8 12.3L229.1 23.2L220.5 18.7ZM237.6 16.0L237.6 -13.1L251.8 -13.1L251.8 9.4L244.7 16.9ZM256.1 -13.1L254.7 16.9L259.0 25.8L267.5 34.3L268.9 35.1L281.7 34.3L287.4 37.6L295.9 46.3L301.6 50.1L300.2 59.7L298.8 68.1L287.4 71.5L288.8 76.1L297.4 74.8L304.5 79.3L307.3 84.4L315.9 88.7L321.6 91.1L324.4 87.5L317.3 80.6L324.4 85.0L327.3 81.2L323.0 74.8L317.3 66.0L315.9 62.5L324.4 68.1L328.7 71.5L334.4 60.4L332.9 53.9L327.3 50.1L318.7 42.4L315.9 31.8L307.3 23.2L298.8 18.7L290.3 9.4L280.3 -13.1ZM261.8 68.1L267.5 64.6L271.8 66.0L278.9 74.8L281.2 79.3L273.2 81.2L266.1 83.1L261.2 80.6L264.6 74.8ZM182.1 -13.1L176.4 -5.6L190.6 -4.5L207.7 -7.7L210.6 -13.1ZM582.8 25.0L590.5 25.8L597.9 31.0L594.2 36.0L603.3 39.2L611.9 41.6L619.0 47.8L624.7 52.4L626.7 59.0L623.2 63.2L617.5 64.6L609.0 61.8L603.3 59.0L601.9 56.8L604.7 61.8L608.2 68.1L608.4 74.8L613.3 78.0L617.5 78.0L615.6 75.4L613.6 70.8L619.0 71.5L622.7 71.5L624.7 74.8L623.2 67.4L627.5 63.9L629.8 61.1L634.6 64.6L636.0 59.0L634.1 50.1L632.6 44.8L638.9 46.3L641.7 51.6L640.3 57.5L645.4 57.5L648.3 51.6L651.7 49.4L661.7 43.2L664.5 48.6L671.6 46.3L677.3 47.1L680.2 44.8L681.0 36.8L685.9 36.8L693.0 40.0L700.1 47.1L700.9 38.4L699.5 27.6L701.5 21.4L704.4 12.3L707.2 7.5L710.0 3.6L714.3 7.5L716.6 16.9L715.7 25.8L718.6 38.4L718.6 46.3L714.3 57.5L715.7 61.8L720.0 59.7L721.4 46.3L720.0 30.1L719.4 18.7L722.3 9.4L725.7 16.9L731.4 14.1L730.0 23.2L737.1 14.1L744.2 18.7L747.0 30.1L745.6 21.4L739.9 7.5L738.5 2.6L742.8 -13.1L828.2 -13.1L822.5 0.6L832.4 4.6L836.7 1.6L849.5 7.5L859.5 8.5L862.3 0.6L870.8 2.6L878.0 8.5L876.5 18.7L882.2 27.6L886.5 21.4L887.9 17.8L896.5 21.4L900.7 23.2L905.0 14.1L909.3 9.4L916.4 11.3L924.9 14.1L937.7 21.4L943.4 26.7L956.2 25.8L964.8 32.7L969.0 38.4L976.1 36.8L986.1 36.0L993.2 42.4L994.6 33.5L1001.8 35.1L1010.3 36.8L1021.7 42.4L1027.4 46.3L1027.4 74.9L1021.7 71.5L1017.4 74.2L1014.6 73.5L1016.0 83.0L1019.7 90.1L1010.3 92.0L1004.6 92.7L1000.3 97.6L994.1 104.3L987.5 101.3L981.8 102.5L976.1 104.3L973.3 109.6L972.7 116.4L973.9 117.0L972.7 122.5L974.2 125.2L970.5 131.6L969.9 134.2L964.8 140.8L961.1 142.3L955.4 152.1L953.7 146.8L952.2 136.8L952.5 126.3L955.7 118.1L959.1 115.3L964.8 106.6L969.0 100.7L973.3 94.5L979.0 88.2L974.7 88.9L971.9 93.9L966.2 100.1L966.2 92.7L959.1 92.7L954.8 94.5L950.5 104.9L944.8 108.4L938.6 106.6L932.0 107.8L923.5 107.8L916.9 107.8L910.7 112.4L907.8 117.0L902.7 124.1L899.3 131.6L894.2 133.1L899.3 136.8L901.3 138.8L905.0 136.8L909.3 140.3L911.3 140.8L911.8 145.8L909.5 154.0L909.0 160.7L905.0 167.9L903.6 171.3L897.9 178.1L893.6 183.3L888.5 186.4L885.1 184.8L881.7 187.1L878.8 189.8L878.5 193.6L874.3 196.4L872.5 197.1L872.3 199.3L874.8 201.9L877.4 206.7L878.0 210.9L877.1 214.0L873.7 215.0L869.4 216.3L868.8 214.9L869.4 210.7L868.6 207.9L869.7 205.8L865.7 204.6L864.3 203.1L865.7 201.0L865.1 198.1L863.4 196.6L859.5 197.6L855.2 200.0L854.3 197.8L855.8 196.0L856.9 193.8L854.3 192.6L850.9 195.9L849.8 196.3L845.2 199.1L844.7 200.9L847.8 203.5L848.6 204.2L849.5 206.4L852.9 204.0L854.9 204.7L858.0 205.5L858.0 207.3L852.1 210.3L848.9 213.7L851.8 216.5L853.5 220.7L856.3 225.1L856.3 227.4L853.2 229.6L856.6 231.0L855.5 235.5L853.5 237.4L850.1 243.4L845.8 248.0L841.8 251.6L834.4 254.5L831.0 255.3L826.7 256.8L823.9 257.6L823.0 260.3L821.6 258.5L821.0 256.6L817.6 256.3L816.8 256.5L813.4 258.9L810.8 262.5L810.5 264.8L812.8 268.5L815.9 271.5L817.6 272.7L819.6 277.5L820.5 279.5L820.8 283.3L820.2 285.0L817.3 287.9L814.2 289.5L813.1 291.5L807.7 294.2L807.9 290.8L806.8 289.1L804.0 288.4L802.5 286.4L801.4 284.3L798.3 282.5L796.6 280.4L795.4 279.8L794.0 280.7L793.7 282.7L792.9 286.4L792.0 288.4L791.7 291.9L793.7 292.8L794.3 294.5L795.7 298.0L798.3 298.9L800.5 300.9L803.1 303.6L804.0 306.7L803.7 307.8L804.0 310.7L805.1 311.8L806.2 314.7L804.8 314.9L803.7 314.6L800.3 312.3L797.7 310.0L796.0 307.1L794.9 303.1L794.9 300.2L793.7 299.4L792.6 297.6L790.9 295.6L789.2 295.8L789.2 292.7L790.0 289.8L789.7 287.5L790.0 282.9L788.6 278.2L787.7 274.7L787.2 270.8L785.5 269.3L783.5 270.8L780.6 272.8L777.5 272.1L778.3 267.7L777.8 263.8L773.8 259.8L772.1 257.7L771.2 255.8L770.7 253.1L768.4 252.1L767.0 253.9L764.1 254.4L761.3 255.0L759.8 254.6L757.6 255.2L757.0 257.6L756.1 259.1L753.6 260.3L751.3 261.7L746.5 266.4L743.6 268.7L743.6 269.9L740.2 271.6L737.9 272.7L737.4 275.9L737.9 279.7L736.8 282.9L736.8 287.8L735.1 287.7L733.9 290.6L732.0 292.0L730.0 293.9L728.3 292.7L726.3 288.4L725.1 284.6L722.3 279.9L719.4 272.3L718.0 267.8L716.6 261.8L716.3 257.3L716.3 255.2L715.7 252.1L714.9 253.3L714.6 255.8L711.5 256.6L709.8 255.9L707.5 253.8L705.8 251.6L709.8 249.8L706.9 250.1L704.4 248.2L701.5 246.9L700.1 243.7L698.7 241.8L693.0 242.3L686.7 242.5L683.0 242.1L677.3 241.4L673.9 240.8L671.6 237.6L669.6 235.7L665.9 237.3L661.7 237.0L658.8 234.8L654.0 230.3L652.3 226.7L648.9 225.7L647.7 226.7L646.0 228.7L646.9 231.2L648.3 234.5L650.8 236.4L652.3 238.0L652.3 241.1L654.0 243.3L654.0 241.1L655.1 239.2L656.3 241.7L656.0 243.9L658.8 245.2L664.2 244.2L666.8 241.7L668.8 240.2L669.9 238.6L669.9 242.7L671.1 244.5L676.2 247.0L679.6 250.4L678.5 253.8L675.9 256.8L673.9 261.0L670.2 264.0L663.4 267.0L658.0 269.3L649.1 274.3L644.6 276.6L637.5 279.3L633.2 279.5L632.3 277.8L631.5 273.4L630.9 268.7L627.5 262.5L626.4 260.7L621.0 253.5L617.5 245.5L615.3 242.0L613.3 238.9L611.0 235.4L608.4 233.2L609.0 228.3L607.0 233.8L605.0 232.5L602.2 227.0L602.2 230.0L605.6 235.7L608.7 242.7L610.4 245.8L614.4 251.9L615.3 259.2L619.0 264.0L621.8 271.1L623.8 272.8L628.1 276.3L630.9 278.7L632.6 280.1L630.6 283.0L632.3 283.0L637.5 286.2L643.2 284.2L649.4 283.6L655.4 282.2L655.1 286.2L654.0 290.2L651.1 293.1L647.4 300.8L644.6 304.5L638.3 310.1L630.4 316.9L625.8 322.3L623.5 324.9L622.4 327.1L620.7 330.3L621.2 335.1L621.8 338.5L621.8 341.4L623.8 345.1L624.9 346.3L624.7 352.9L625.2 358.8L623.0 362.3L614.4 367.3L612.7 370.0L608.7 373.0L609.9 378.1L610.4 380.3L610.4 385.5L609.6 387.4L605.3 389.2L602.2 392.1L603.0 395.2L600.8 401.0L597.6 404.6L595.3 408.2L588.8 414.9L582.5 418.3L580.0 418.9L572.3 418.9L566.3 421.0L562.1 419.6L561.8 417.9L560.6 414.2L561.5 409.8L558.6 404.9L557.5 402.6L556.1 400.4L552.7 394.0L551.8 388.9L550.7 382.4L548.7 376.6L547.0 373.6L543.6 367.6L543.0 365.5L544.1 359.3L545.0 354.4L547.5 351.8L548.7 347.1L547.0 340.8L545.8 335.7L544.4 333.1L543.8 331.4L543.0 329.4L540.7 326.8L537.9 323.7L535.9 321.2L534.4 317.8L536.2 314.7L536.7 313.0L537.3 310.4L537.6 307.6L536.7 304.8L534.7 303.0L533.0 302.8L529.3 303.3L526.8 303.6L524.8 301.1L523.6 299.4L519.1 297.6L516.2 297.9L512.8 298.5L508.8 300.2L503.4 302.5L498.0 300.8L492.3 302.2L487.5 303.3L482.9 300.8L478.7 297.9L476.7 296.2L473.8 294.5L471.8 291.6L470.4 288.8L467.3 285.0L465.0 281.9L461.9 280.4L462.2 277.2L459.6 273.7L462.4 269.9L463.9 263.7L463.0 259.8L460.9 255.6L461.9 251.9L464.1 246.7L466.7 243.3L468.1 239.2L471.3 235.7L472.7 233.5L476.7 232.2L480.4 228.7L482.1 225.4L481.2 224.7L481.5 221.8L483.2 219.1L487.8 214.7L490.0 213.3L492.6 207.1L494.3 206.8L496.6 209.2L498.3 209.2L501.1 208.9L503.7 209.6L507.7 207.5L510.8 205.7L513.1 204.7L518.2 203.6L523.9 203.6L529.0 203.3L531.6 203.3L537.6 201.8L538.7 203.3L541.0 202.6L539.6 205.0L539.6 207.1L540.7 209.2L540.1 210.9L538.1 213.7L540.4 214.0L542.1 216.1L547.0 217.1L552.4 218.8L553.2 222.1L556.6 222.8L560.6 224.7L563.8 225.7L566.3 223.7L566.6 219.8L569.2 217.4L573.7 217.4L577.7 219.8L581.1 221.8L586.8 222.1L591.9 224.1L594.5 222.8L597.6 221.4L601.3 222.4L604.7 223.1L606.7 222.4L608.4 219.8L609.0 217.4L610.4 213.7L611.3 211.6L611.3 208.2L612.4 204.3L610.7 204.3L607.9 203.6L605.3 205.7L602.7 206.4L600.5 204.7L596.8 203.3L596.2 205.4L593.9 206.1L592.2 204.3L589.9 203.6L587.4 202.9L586.8 200.4L584.2 198.3L585.7 195.7L583.7 193.9L584.0 192.1L587.7 190.9L591.9 190.6L593.4 189.1L591.9 188.1L588.5 188.3L585.1 190.6L583.4 189.8L583.1 189.1L578.8 188.7L577.4 192.1L574.6 189.8L573.7 192.1L574.9 194.6L574.9 196.5L576.9 199.7L577.7 200.6L574.9 199.7L575.4 201.8L575.4 205.0L573.4 205.0L572.3 202.9L571.2 203.6L570.0 200.1L571.2 198.6L569.5 198.3L568.3 196.1L566.9 193.9L566.3 192.4L564.9 190.2L564.6 187.2L563.8 184.2L560.9 182.3L556.1 178.8L552.7 176.4L550.4 171.6L548.7 173.2L548.7 170.4L544.4 171.2L545.0 173.2L545.3 176.4L547.8 178.4L549.8 182.6L555.5 184.9L557.5 188.0L560.6 189.8L562.1 191.7L561.8 192.8L560.6 192.1L558.4 190.2L556.6 192.8L558.4 195.4L556.6 196.8L555.2 199.7L553.8 199.0L554.4 197.2L555.5 195.7L554.1 192.1L551.5 189.5L549.8 189.1L548.1 187.6L545.3 186.8L543.0 184.2L541.0 183.0L539.3 181.1L538.7 178.8L537.3 176.4L534.7 175.2L533.6 175.6L530.2 178.0L526.2 180.3L524.8 179.5L522.5 179.2L519.9 179.2L517.9 181.9L518.8 183.4L515.7 186.8L512.8 188.0L512.0 189.5L509.4 192.1L508.5 193.9L510.0 196.8L508.0 198.3L506.6 200.8L503.1 204.0L496.9 204.0L494.2 206.1L493.5 206.4L491.5 204.7L489.5 202.2L486.9 202.9L483.8 202.9L484.1 199.3L482.4 196.5L482.6 194.3L484.1 191.7L484.6 188.0L484.1 183.8L482.9 181.1L485.5 179.2L486.9 177.6L493.2 178.4L498.6 178.8L504.0 179.2L505.7 174.4L506.3 170.4L506.0 168.0L504.3 166.8L503.1 163.4L499.7 161.8L496.9 161.3L495.7 159.2L498.0 157.5L500.9 157.1L503.7 157.9L505.1 157.9L504.8 155.4L504.0 153.2L505.7 153.2L506.3 154.5L508.5 154.9L509.7 154.1L512.5 152.3L514.0 148.8L514.8 147.4L517.7 146.5L519.6 145.2L521.1 142.9L522.9 138.5L525.1 136.8L528.8 136.1L532.5 135.4L534.2 133.9L533.9 131.5L533.0 129.1L533.3 126.1L532.5 123.6L532.7 120.0L533.9 117.9L537.9 115.3L539.6 114.8L539.3 116.4L538.7 120.0L540.4 121.5L538.4 124.6L537.3 125.6L536.4 128.6L537.3 129.6L538.4 131.5L541.0 131.5L540.4 133.5L543.8 132.5L547.5 130.5L549.8 133.9L553.8 132.5L557.8 130.1L562.9 130.5L562.6 131.5L565.2 131.5L566.0 129.1L569.5 125.1L569.2 121.0L570.6 116.4L573.7 114.5L575.4 117.9L578.0 118.5L579.1 111.0L576.3 110.0L576.3 106.7L579.7 105.3L589.1 105.0L595.3 102.8L591.1 98.2L586.2 99.3L580.5 101.1L574.9 103.3L572.6 99.9L570.0 96.4L570.6 93.5L570.6 83.8L573.4 80.0L575.1 79.0L581.7 71.5L579.4 66.7L578.0 66.0L572.6 67.4L570.6 69.4L569.7 73.5L567.2 79.3L562.6 82.5L560.3 86.9L558.6 88.1L558.1 92.3L558.4 98.2L562.1 100.5L563.2 103.3L563.2 106.1L557.8 109.4L556.9 114.3L556.1 120.0L553.8 122.6L550.1 123.6L550.4 125.8L548.7 126.6L547.0 126.8L546.4 125.6L545.5 123.3L545.0 122.1L545.8 120.0L544.1 117.9L543.3 114.8L541.6 111.0L541.3 108.3L540.4 106.7L539.9 102.8L539.3 106.1L537.9 107.8L536.2 108.3L534.4 110.5L532.2 112.7L529.5 113.2L526.5 110.8L525.3 107.8L524.2 105.6L523.6 99.9L523.3 95.9L523.6 92.9L523.9 89.3L526.8 87.5L531.3 83.8L534.2 80.6L537.9 76.1L541.3 72.1L544.1 68.1L545.3 64.6L546.4 59.0L550.4 55.3L550.7 48.6L556.4 44.0L555.2 40.0L563.2 36.8L567.7 33.5L576.9 28.4ZM-8.6 40.0L-1.2 43.2L5.7 48.6L12.8 57.5L19.9 57.5L26.4 63.9L19.9 75.4L15.6 76.1L9.9 72.1L7.1 68.1L1.4 68.1L-0.0 63.2L-8.6 69.4ZM493.2 151.6L497.4 150.3L499.4 149.7L502.3 149.2L505.7 148.5L510.3 148.5L513.4 146.7L513.4 145.6L511.4 145.2L512.2 143.8L514.2 140.6L513.1 138.7L510.0 138.7L510.3 135.9L509.1 134.9L508.8 133.0L506.0 130.5L504.8 126.1L503.4 124.1L500.3 123.6L502.0 122.1L503.4 118.5L504.3 115.3L499.4 114.8L497.4 115.8L500.6 110.0L495.2 110.0L492.9 114.3L493.2 119.5L491.8 122.1L493.5 126.6L495.5 127.6L495.5 130.1L499.7 129.1L500.9 133.5L500.6 136.3L496.3 136.8L497.7 139.2L497.4 141.5L494.3 143.3L497.2 144.7L500.9 145.6L497.4 146.5L494.6 150.5ZM480.4 144.2L486.1 143.8L491.5 141.9L492.3 136.8L493.7 131.5L491.5 127.6L486.1 127.6L484.9 131.5L480.7 132.5L482.9 137.3L479.5 142.4ZM656.0 20.5L660.2 29.3L673.0 29.3L667.4 16.9L670.2 5.5L675.9 -2.5L683.0 -13.1L702.9 -30.3L680.2 -36.5L665.9 -18.6L661.7 2.6L657.4 15.1ZM646.9 40.0L651.7 44.0L650.3 38.4ZM913.5 173.7L917.8 170.0L915.8 167.1L916.9 159.9L921.2 161.6L917.2 151.6L917.2 142.8L915.8 135.2L914.1 139.3L913.0 146.8L914.1 156.4L913.2 165.0ZM907.8 191.0L911.3 189.8L910.7 187.1L917.2 189.1L923.5 184.0L922.6 180.5L918.7 180.5L913.0 175.3L912.4 181.3L908.7 184.4L907.3 187.9ZM881.9 217.8L885.9 217.8L889.3 216.5L893.6 215.8L894.2 218.2L895.9 219.5L898.7 216.5L900.2 215.8L904.4 215.4L907.3 214.4L910.4 212.0L909.5 208.1L910.7 203.8L912.4 202.4L913.5 198.0L912.1 194.7L911.8 191.3L908.7 192.1L907.8 194.3L907.6 197.3L906.4 202.0L903.6 206.0L900.2 205.6L899.3 208.1L896.5 210.9L895.9 212.3L892.2 212.3L887.9 212.7L883.6 215.8ZM878.8 221.2L881.9 218.2L884.2 219.2L884.8 221.9L882.2 226.9L881.1 227.6L879.9 226.6L879.9 222.9ZM885.4 219.9L887.9 217.8L892.2 217.2L892.8 218.5L891.3 220.2L887.9 221.9ZM851.2 252.7L853.8 246.6L856.3 246.3L855.2 251.3L853.2 256.1ZM818.8 263.5L821.0 261.5L825.0 261.3L825.0 264.3L821.6 266.6L818.8 265.3ZM851.8 273.8L852.3 266.7L856.9 266.5L857.8 271.0L855.5 274.5L856.6 279.2L860.3 280.4L862.6 284.0L860.3 283.0L858.0 281.0L853.8 280.6L852.6 278.8L850.9 276.7ZM856.6 299.9L859.5 296.0L863.2 295.8L866.6 292.1L868.8 295.9L869.4 300.2L866.6 303.0L866.0 300.7L862.3 302.0L862.3 298.6L858.0 298.5ZM856.6 289.9L856.6 286.1L860.0 287.1L859.5 290.8L860.6 293.7L858.0 293.1ZM863.2 288.9L863.2 284.3L866.6 284.9L866.9 288.7L865.1 291.2ZM843.0 295.6L846.9 291.7L849.5 287.4L849.5 290.0L845.2 294.5ZM852.1 281.4L854.6 281.5L854.9 284.7L853.5 284.6ZM819.6 314.7L820.5 319.0L822.5 323.3L823.0 327.2L827.3 327.6L831.0 328.6L835.6 330.6L839.5 329.9L841.0 326.5L841.0 323.1L843.8 319.5L844.7 316.7L848.1 316.8L844.4 313.3L844.1 307.6L848.6 304.9L843.8 300.8L841.8 299.9L839.5 302.4L837.5 305.2L833.6 306.5L831.0 310.1L826.4 311.5L825.9 314.8L823.3 314.2ZM780.6 302.2L786.9 303.5L790.3 307.5L794.9 311.0L798.3 313.4L803.7 317.2L804.8 321.4L807.1 324.0L811.1 327.3L810.5 335.2L807.1 335.1L802.5 331.6L798.3 327.0L795.1 321.2L791.2 316.9L789.7 313.2L786.0 309.1L781.2 304.8ZM808.8 338.0L811.1 335.5L818.2 337.6L824.7 337.2L830.1 338.8L835.3 341.2L835.0 344.0L830.1 343.1L822.5 341.7L816.8 341.0L812.5 339.8ZM836.7 342.3L842.4 343.0L848.1 343.2L852.3 343.3L858.9 343.4L859.5 344.3L850.9 345.0L846.7 344.6L841.8 345.0L837.3 344.4ZM860.9 349.2L865.1 345.6L871.4 344.0L869.4 346.2L863.7 349.0ZM848.1 346.6L851.5 346.4L853.2 348.5L849.5 347.8ZM849.5 335.2L849.2 329.5L847.5 327.5L850.4 319.9L850.9 317.4L853.8 316.0L859.5 317.3L864.6 315.4L865.7 316.0L863.2 318.8L855.2 318.3L851.5 319.7L851.5 322.2L854.3 322.3L860.3 322.4L860.0 322.7L855.8 325.1L857.5 329.2L858.9 331.5L860.0 334.9L857.2 334.0L856.0 333.4L853.8 327.4L851.8 327.9L852.1 335.3ZM872.0 317.6L873.7 313.9L875.7 316.0L873.7 318.5L876.0 319.7L873.4 320.2L874.5 322.5L872.8 321.0ZM873.4 329.2L878.0 328.2L881.7 329.9L878.0 330.2L874.3 330.1ZM868.0 329.1L871.4 329.2L870.8 330.9L868.6 330.3ZM882.2 322.6L886.5 321.4L890.8 322.6L891.3 327.4L893.6 329.6L896.5 326.8L901.6 324.5L906.4 326.5L910.7 327.7L916.4 329.9L920.6 331.1L924.3 334.5L927.8 337.3L930.0 339.3L927.8 339.6L930.6 343.0L934.9 347.3L938.6 349.6L936.3 350.8L930.6 349.0L927.2 346.7L924.9 343.3L920.6 342.2L916.4 343.9L917.2 345.9L912.1 346.5L907.8 343.6L904.4 343.9L902.1 341.0L904.4 339.6L902.1 335.9L896.5 333.3L890.8 331.3L887.3 331.6L885.1 328.5L889.3 327.4L885.9 326.5L882.2 324.3ZM931.5 336.2L936.3 334.5L940.6 332.2L942.8 332.5L942.0 335.9L937.7 338.2L933.5 337.9ZM938.6 327.7L942.0 329.4L944.8 332.8L943.7 332.2L940.6 329.4ZM949.4 335.0L953.1 338.7L951.4 339.6L949.7 337.0ZM963.3 346.7L967.0 347.6L965.6 348.5L963.6 347.9ZM736.5 294.4L737.6 289.2L740.5 292.7L742.5 296.5L741.3 299.3L737.9 300.4L736.5 297.8ZM649.7 355.0L651.7 359.3L653.1 365.2L650.6 366.7L650.0 372.1L647.4 380.3L645.4 388.0L643.2 394.3L638.9 395.9L634.6 394.3L632.6 386.4L635.5 380.3L634.6 374.2L635.8 367.3L640.3 366.1L644.0 363.2L646.0 359.3ZM544.7 199.3L547.3 198.6L553.8 198.3L552.4 202.9L552.1 204.0L547.8 201.8ZM532.7 195.7L532.7 188.7L535.6 187.6L537.3 190.2L536.7 195.0L535.0 195.7ZM533.9 186.5L533.9 182.6L536.2 180.7L536.4 184.6L535.6 186.8ZM576.3 208.9L578.3 207.8L584.2 208.9L584.0 209.9L577.7 210.1ZM601.3 210.3L603.3 208.5L607.9 207.5L606.2 209.9L603.3 211.3ZM516.2 193.9L518.5 192.2L519.1 193.9L517.9 194.6ZM540.7 127.6L541.6 124.1L545.0 123.1L545.0 127.1L543.6 129.1L543.0 127.6L538.7 128.1L537.6 126.1L539.6 125.6ZM560.9 118.5L562.9 113.7L563.8 114.3L562.6 117.4ZM571.7 111.6L573.4 110.0L575.7 110.5L573.7 113.2ZM831.6 395.5L832.7 390.8L833.3 384.7L834.4 382.5L839.5 379.6L843.8 379.1L848.1 377.4L853.8 376.0L857.2 372.2L857.2 368.6L860.9 369.6L861.7 366.4L865.1 363.8L869.4 360.1L873.1 361.7L875.1 362.9L878.0 362.9L878.8 358.9L880.8 356.0L882.2 355.1L886.5 354.5L886.8 352.5L893.6 355.1L897.9 354.5L898.7 356.0L896.5 358.3L895.0 362.7L897.9 365.6L902.1 368.3L906.4 370.6L910.1 370.6L912.1 364.7L912.4 358.9L913.0 356.0L914.1 351.3L915.2 350.8L917.8 356.8L918.7 361.2L920.9 361.5L923.2 364.7L923.5 368.6L925.5 374.5L929.2 376.3L932.9 379.0L934.9 384.2L938.6 386.0L938.9 389.1L943.4 393.4L945.4 396.6L946.3 402.9L945.4 409.4L943.7 416.7L940.6 421.1L938.6 426.9L936.3 432.5L936.0 435.0L930.6 436.4L926.1 440.7L922.1 438.6L920.6 437.5L917.8 439.6L912.1 438.2L907.8 435.0L906.7 429.7L903.6 428.3L903.6 424.5L901.6 419.4L900.7 423.4L899.3 426.9L896.5 425.2L894.2 424.8L893.6 421.1L890.8 418.7L886.5 416.0L882.2 414.3L876.5 414.9L868.0 416.7L862.3 419.7L860.9 422.0L855.2 421.9L849.5 423.4L845.2 425.8L841.0 425.3L837.0 422.8L836.7 420.1L838.7 419.5L838.7 414.4L836.7 408.4L835.6 403.5L833.8 400.3ZM921.2 446.6L926.3 448.1L931.2 447.0L931.5 451.5L930.0 456.2L926.3 457.7L923.5 454.6L922.6 450.8ZM1000.9 424.1L1005.5 427.2L1007.5 431.4L1010.3 435.3L1016.0 435.3L1017.4 436.0L1015.7 440.7L1013.1 442.2L1012.6 445.9L1008.3 450.0L1006.9 448.9L1008.0 444.8L1004.0 441.8L1006.3 438.9L1006.6 434.6L1005.2 431.4L1001.8 426.9ZM1000.9 445.9L1005.5 448.9L1004.6 451.5L1001.2 456.2L1001.8 458.9L996.6 461.3L995.5 466.9L991.8 469.8L988.4 469.8L983.3 467.3L986.1 462.5L989.0 459.3L994.6 455.0L997.5 450.8L999.2 447.4ZM976.1 378.4L980.4 381.1L984.7 385.1L983.3 385.1L979.0 382.6L976.1 379.9ZM1014.0 370.6L1017.7 370.3L1017.7 372.7L1014.3 372.7ZM661.1 279.8L664.5 279.8L664.2 280.7L661.7 280.7ZM923.5 182.1L926.3 179.3L932.9 175.3L930.6 176.5L926.3 180.5ZM808.8 323.8L811.1 323.3L813.1 326.7L811.1 326.7ZM772.9 285.1L773.8 279.3L774.4 280.2L773.8 284.8Z" fill="#fffaff"/>
<path d="M247.0 166.3L251.8 167.2L259.0 165.5L263.2 168.0L269.2 167.6L269.2 160.9L264.6 156.7L257.5 155.8L253.3 159.2ZM258.7 186.5L264.4 186.1L264.9 178.8L268.3 169.6L264.6 168.4L258.7 172.4L258.4 180.7ZM268.1 168.4L271.2 178.8L275.2 181.1L277.7 179.5L278.9 173.6L282.9 175.2L281.4 169.2L276.0 166.8ZM271.5 184.9L274.6 187.6L281.7 185.3L285.4 181.5L280.9 180.7L274.6 183.0ZM281.7 180.3L287.4 180.3L292.8 179.5L292.8 175.2L287.4 176.0L282.9 176.8ZM153.6 70.1L159.3 72.1L166.5 69.4L169.3 63.2L173.6 61.1L167.9 56.8L160.8 60.4L156.5 60.4L159.3 66.0ZM176.4 95.9L182.1 97.0L187.8 93.5L193.5 86.9L197.8 85.0L193.5 85.0L186.4 89.3L180.7 88.7L176.4 91.7ZM192.9 109.4L197.8 107.8L206.3 106.1L206.3 105.0L197.8 105.0L193.5 107.2ZM216.8 121.0L219.1 120.5L220.5 114.3L218.3 112.7ZM228.2 149.7L235.3 150.1L233.3 142.9L230.5 134.4L226.8 133.9L229.1 141.5ZM309.9 359.6L312.2 360.2L313.9 362.9L311.3 362.9ZM589.1 186.1L590.8 179.2L591.1 175.6L593.9 172.0L597.1 166.8L600.5 167.2L604.7 168.4L602.5 170.8L604.7 174.8L609.6 173.2L613.3 171.6L610.4 168.0L617.0 163.9L621.0 164.3L617.3 168.0L618.4 170.8L614.7 172.0L616.1 174.0L620.4 176.8L623.2 179.2L627.5 183.0L627.5 186.5L623.2 188.3L617.5 188.3L613.3 187.2L609.0 184.6L604.7 184.6L600.5 185.7L597.6 188.0L592.5 187.6ZM648.9 166.8L654.5 164.7L660.2 165.1L660.2 171.6L655.1 172.8L652.6 175.2L655.1 179.9L659.7 182.3L659.7 187.6L663.1 189.1L660.2 193.9L662.8 199.3L662.5 202.9L657.4 204.3L652.3 201.5L648.9 197.9L649.7 190.9L646.9 184.9L644.6 180.7L643.2 174.8L644.6 170.4ZM675.9 166.3L683.0 166.8L684.4 170.9L681.0 176.8L676.7 176.8L675.6 171.6ZM718.6 172.5L724.3 167.3L734.2 167.2L734.2 169.2L725.7 170.2L721.4 174.2ZM804.8 147.2L809.7 143.0L816.8 135.7L821.0 127.1L822.5 127.6L819.6 137.3L812.5 145.5L806.8 148.2ZM595.3 102.2L599.0 92.9L603.0 95.9L601.9 101.1ZM607.6 96.4L608.4 86.9L612.7 90.5L611.3 96.4ZM599.9 318.1L601.0 315.0L606.2 315.0L606.7 318.6L604.7 323.2L600.5 322.9ZM592.5 325.4L594.2 326.0L595.3 334.2L598.2 340.2L596.2 340.5L593.1 333.7ZM606.2 343.1L607.9 343.1L609.6 351.5L609.6 356.7L607.9 356.7L607.0 350.0Z" fill="#96cafc"/>
<path d="M167.9 102.2L167.9 134.4L185.0 156.2M196.3 102.2L196.3 156.2M219.1 102.2L220.8 156.2M238.5 156.2L238.5 139.2L256.1 119.0M113.8 102.2L239.6 102.2M120.9 43.2L128.0 57.5L145.1 90.5L156.5 102.2M219.1 102.2L219.1 76.7L190.6 71.5L166.5 38.4M283.1 146.5L283.1 162.6L290.3 169.6L297.4 172.0M327.3 102.2L327.3 128.6L318.7 131.0L317.3 142.9L347.2 142.9L347.2 145.2M156.5 168.0L170.7 168.8L176.4 168.8M155.9 184.6L193.5 184.6M176.4 156.2L176.4 184.6M179.3 172.8L213.4 172.8M193.5 172.8L193.5 188.3L213.4 188.3M185.0 184.6L185.0 202.9L240.2 202.9M199.2 188.3L199.2 222.4M219.1 188.3L219.1 202.9M167.9 184.6L167.9 195.7L183.2 209.9L183.0 217.8M213.4 156.2L213.4 188.3M213.4 168.8L234.8 168.8M213.4 180.7L234.8 180.7M219.1 192.1L238.2 192.1M216.3 204.7L224.8 204.7L224.8 211.6L240.5 214.7M216.3 202.9L216.3 220.1L206.0 220.1M234.8 156.2L234.8 180.7L236.8 189.8L240.2 195.7L240.2 214.7L241.9 216.7L242.7 226.7M234.8 178.8L249.8 178.8M236.8 189.8L249.3 189.8M240.2 204.7L254.7 204.7L293.4 204.5M241.9 216.7L249.8 216.7M247.6 165.9L245.3 172.8L249.8 178.8L250.4 192.1L255.5 202.9L253.3 209.9L249.8 216.7L249.0 223.4L254.1 223.4L254.4 226.0M253.3 209.9L269.5 209.9L272.9 209.9L276.0 209.2L284.6 210.6L286.0 213.7M257.5 209.9L258.4 225.7M265.8 209.9L267.5 219.1L267.5 223.4L260.4 223.4L260.4 225.7M267.5 223.4L276.0 224.7L277.5 224.4M260.4 182.6L260.4 195.7L259.0 200.1M251.8 182.6L261.8 182.6M268.1 185.7L268.1 195.4M260.4 185.7L280.3 184.9L280.3 189.8M268.1 195.4L274.6 197.5L278.9 193.9L280.3 189.8M280.3 184.6L295.9 184.6L300.2 184.2M280.3 193.2L293.7 193.2M282.3 184.6L282.3 193.2M300.8 172.8L300.8 181.5L300.2 188.3M305.9 172.8L303.1 181.9L307.3 181.9M288.8 195.0L283.1 197.5L280.9 201.1L271.2 204.3M876.5 362.9L876.5 414.9M876.5 396.5L910.7 396.6M902.1 368.3L902.1 396.6M910.7 396.6L910.7 437.1M910.7 406.1L933.5 404.9L946.3 403.6M910.7 422.8L927.8 429.7L936.0 435.0" fill="none" stroke="#dadaf4" stroke-width="1" stroke-dasharray="3 2"/>
<path d="M108.1 37.2L108.1 100.5L113.8 102.2L118.1 108.3L123.8 103.3L129.5 110.5L134.3 120.5L139.4 124.1L138.6 129.6M158.8 156.2L238.5 156.2L239.6 154.9L249.0 160.1L254.7 160.5L257.8 159.2L268.1 165.5L271.8 168.4L274.6 171.6L274.9 180.7L272.9 184.2L274.6 185.7L284.6 181.5L284.3 179.5L290.8 178.4L295.1 173.2L296.8 172.8L305.9 172.8L309.3 168.0L312.5 162.8L316.4 164.3L316.4 170.0L318.1 172.4M176.1 218.4L183.0 217.8L193.5 222.4L201.5 222.4L201.5 220.8L206.3 220.8L210.9 224.7L213.4 229.0L216.8 227.4L220.8 227.4L223.9 232.2L226.2 234.8L227.4 238.3L232.8 239.8M247.0 274.3L247.0 272.0L248.4 269.6L252.1 269.6L250.4 266.2L250.4 264.6L255.5 264.6L255.5 270.2L256.4 270.2M258.1 270.8L255.5 274.6L253.0 276.5M255.3 274.6L259.5 277.5M260.9 278.7L262.7 276.3L265.5 275.8L268.3 273.7L272.6 272.8M265.5 284.2L271.2 284.8M273.5 292.8L274.3 288.5M289.1 291.1L287.7 295.4M306.5 282.2L303.1 284.2L301.6 289.4L303.3 291.9L304.5 295.9L310.2 295.9L317.3 298.2L316.4 303.0L317.9 306.2L318.7 312.4L310.7 311.0L310.7 312.7L311.9 318.6L310.2 327.7M310.2 327.7L308.2 326.6L301.9 322.6L298.8 318.6L295.1 316.1L288.8 314.7L285.1 311.8M295.1 316.1L294.5 320.0L286.6 325.4L284.6 330.0L280.9 328.3L280.9 325.4M310.2 327.7L301.9 330.5L299.1 336.5L301.9 342.5L308.5 342.8L308.5 347.1L311.3 346.8L313.9 351.5L313.0 358.2L311.6 366.1L309.0 368.7M311.3 346.8L323.6 343.7L323.6 349.2L326.1 351.5L337.2 355.3L338.6 362.3L343.5 362.6L343.5 365.5L345.2 367.6L344.9 370.6L343.8 373.9L341.2 371.5L333.5 372.4L331.2 380.3L326.4 382.4L323.8 380.0L320.7 379.1L318.1 382.1L315.3 378.1L314.4 372.1L311.6 366.1M318.1 382.1L314.7 387.4L314.4 395.2L311.0 400.0L310.2 408.2L310.7 415.9L308.8 423.4L307.3 428.7L305.3 438.1L305.3 447.0L305.6 454.8L305.9 462.8L303.1 475.4L300.2 481.9L303.6 484.2L304.5 488.7M331.2 380.3L335.8 385.2L345.5 390.2L342.6 396.2L350.0 396.2L354.0 390.8M343.8 373.9L344.6 380.0L350.9 380.6L351.4 385.8L354.9 385.8L354.0 390.8L356.3 393.6L356.6 395.9L350.6 399.4L345.5 405.6L343.8 413.2L343.2 418.3M345.5 405.6L350.0 407.5L355.7 411.2L357.4 413.8L357.4 417.2M318.7 312.4L323.0 313.5L327.3 310.4L326.7 304.2L331.0 305.3L336.4 303.0L336.6 301.1L334.7 299.1L338.1 295.4L338.6 291.6M336.6 301.1L338.6 301.6L339.2 305.6L339.2 309.3L342.1 312.4L348.6 310.4L354.0 309.3L358.8 309.6L362.3 304.5M346.6 298.8L346.3 301.1L344.3 304.5L348.6 310.4M354.0 309.3L355.7 305.6L354.6 301.6L355.7 299.4M503.1 209.6L504.6 215.0L506.0 219.4L499.2 222.8L493.7 227.4L484.7 230.9L484.7 235.4L484.7 239.5L475.2 239.5L475.2 247.6L472.4 248.9L472.4 254.1L461.0 254.1M484.7 234.2L472.4 234.2M484.7 235.4L495.7 242.7L490.9 242.7L493.7 271.4L482.9 271.4L476.7 271.1L474.7 273.4L471.0 269.6L468.1 268.1L462.4 269.6M474.7 273.4L477.0 280.4L470.4 279.8L466.7 279.5L461.9 280.4M461.6 276.9L466.7 276.3L470.1 277.5L466.7 278.1L461.6 278.4M470.4 279.8L470.4 282.4L466.7 284.8M477.0 280.4L483.8 280.4L486.6 286.8L485.2 294.2L482.6 294.8L480.1 291.6L477.5 287.3L471.5 289.9M480.1 291.6L476.7 296.2M485.2 294.2L488.1 303.3M486.6 286.8L493.7 286.2L496.6 279.5L503.7 275.2L510.0 272.8L521.4 269.9L521.4 260.7M493.7 286.2L501.4 288.2L500.6 301.3M501.4 288.2L501.4 284.5L509.4 284.2L511.1 291.6L512.8 298.5M512.0 284.5L514.0 298.2M512.0 284.5L516.2 281.0L519.6 282.4L517.1 297.6M510.0 272.8L516.2 281.0M495.7 242.7L512.8 254.7L518.5 260.7L521.4 260.7L543.6 247.3L536.4 238.6L537.6 232.2L536.4 226.0L533.0 218.4L530.7 213.7L533.0 209.9L533.9 203.3M536.4 226.0L538.7 221.1L542.1 216.4M543.6 247.3L552.1 248.9L577.7 259.5L577.7 258.0L580.5 258.0L580.5 251.9L580.5 221.4M580.5 251.9L614.4 251.9M552.1 248.9L554.9 257.1L553.5 267.2L547.8 274.3L548.1 276.6M519.6 282.4L521.1 277.2L529.3 278.7L536.7 279.3L548.1 276.6L551.0 283.0L547.0 288.8L543.0 295.9L537.9 296.2L533.9 302.2M549.8 279.0L554.1 287.3L552.7 294.8L563.5 291.1L574.6 284.8L572.0 279.5L574.6 271.1L577.7 270.8L577.7 259.5M552.7 294.8L550.7 299.1L555.5 309.6L547.3 309.6L541.6 309.6L537.3 309.3M541.6 309.6L541.6 313.0L537.3 313.0M547.3 309.6L550.7 311.8L550.4 321.2L545.0 322.6L541.0 326.8M555.5 309.6L562.3 305.9L560.1 315.8L554.9 325.7L550.4 329.7L546.7 328.8L544.1 332.2M562.3 305.9L562.3 303.3L573.2 304.2L581.4 301.1L587.4 301.6L581.1 294.8L576.6 291.1L574.6 284.8M576.6 291.1L580.5 286.5L589.1 289.1L594.8 286.8L600.5 281.6L603.9 281.0L605.9 288.8L609.9 281.6L613.0 274.6L614.7 267.0L619.3 264.0M605.9 288.8L603.3 293.7L609.0 300.5L611.6 302.8M613.0 274.6L620.4 274.0L626.1 277.2L630.1 280.1L628.4 284.5L631.8 284.5L631.8 289.4L637.5 291.4L646.0 293.1L637.5 301.6L628.9 303.9L628.6 304.8L621.8 306.2L617.5 305.6L611.9 303.3L611.6 302.8L606.2 303.9L597.3 305.9L593.4 303.3L587.4 301.6M630.1 280.1L632.6 280.1M631.8 284.5L632.6 283.0M628.6 304.8L626.1 307.9L626.1 318.1L627.5 320.6M606.2 303.9L609.0 311.0L606.2 315.5L606.2 318.6L616.7 324.6L621.0 329.1M597.3 305.9L598.5 309.6L593.9 313.5L593.6 319.8L596.2 318.6L606.2 318.6M596.2 318.6L597.1 322.6L595.9 324.0L597.1 325.1L595.9 328.3L593.1 328.4L592.5 325.4L592.5 323.2L593.6 319.8M593.1 328.4L597.1 339.1L603.0 342.5L606.2 342.8L607.9 348.9L616.1 349.2L624.4 345.7M597.1 339.1L591.6 340.0L590.2 342.2L590.8 349.7L594.2 350.6L594.2 354.1L590.2 351.5L586.8 349.4L581.4 347.7L577.7 346.8L577.7 352.9L572.0 352.9L572.0 362.3L576.0 366.4M544.1 332.2L546.4 332.5L556.6 332.5L557.8 336.5L564.9 335.7L564.9 338.5L571.4 336.5L571.4 343.1L572.9 347.7L577.7 346.8M543.0 365.5L549.2 365.8L562.1 365.8L569.2 367.6L576.0 366.4L581.1 367.0M569.2 368.5L569.2 379.7L566.3 379.7L566.3 388.3L566.3 399.7L558.9 400.7L556.4 400.4M566.3 388.3L568.6 394.6L574.0 390.2L582.0 391.1L586.0 384.9L593.1 380.3L587.7 375.1L581.4 367.0L586.2 367.6L591.6 361.4L595.9 360.5L595.3 358.2L603.9 355.8L603.0 350.0L604.2 346.6L603.0 342.5M603.9 355.8L607.3 357.0L611.3 357.9L609.6 364.9L607.0 361.1M595.9 360.5L603.0 363.8L602.7 370.6L601.6 377.5L598.5 380.9L593.1 380.3M598.5 380.9L600.5 387.4L600.5 394.6L603.0 394.8M586.2 403.6L591.1 400.4L593.1 403.6L589.7 406.9L586.2 403.6M484.1 184.9L490.9 184.9L491.8 186.1L489.5 192.1L488.1 193.5L489.5 195.7L488.6 199.3L488.3 202.2M504.3 179.2L511.4 181.9L518.5 183.0M530.7 177.6L529.3 174.0L529.3 169.2L526.8 168.0L530.7 162.6L532.7 156.2L527.6 154.1L521.4 151.9L516.5 147.0M519.1 145.6L526.5 148.3L526.5 143.8L529.3 141.9L529.9 136.8M527.6 154.1L526.5 148.3M534.2 129.1L537.6 129.6M549.8 133.9L551.2 142.9L552.1 147.4L544.1 150.5L548.7 157.1L546.4 162.6L536.7 162.6L531.0 162.2M529.3 169.2L535.0 169.6L539.3 165.5L536.7 162.6M539.3 165.5L544.1 164.7L548.4 166.8L548.4 170.4M548.4 166.8L555.2 165.5L558.1 160.5L557.5 157.9L552.1 156.2L548.7 157.1M552.1 147.4L555.8 149.7L562.9 154.1L557.5 157.9M562.9 154.1L573.7 155.8L572.3 158.8L567.7 158.4L562.9 161.3L558.1 160.5M573.7 155.8L577.7 149.7L576.6 145.2L577.4 139.6L576.3 133.9L574.3 131.5L565.8 131.5M574.3 131.5L574.0 128.6L569.5 127.1M576.3 133.9L582.8 132.5L585.1 125.1L580.3 121.5L569.5 123.1M585.1 125.1L589.7 123.1L587.4 115.8L578.8 113.7M587.4 115.8L587.4 108.9L589.4 105.6M588.5 99.3L594.8 90.5L599.0 85.0L594.8 78.0L593.9 64.6L591.9 52.4L591.6 42.4L597.1 36.0M591.6 42.4L583.4 35.1L582.5 40.8L576.9 44.8L568.0 42.4L576.6 50.9L577.4 63.2L578.0 66.0M568.0 42.4L560.6 46.3L554.9 57.5L550.7 63.9L548.4 74.8L543.8 81.2L544.4 92.3L545.8 95.3L545.0 101.1L543.0 106.1L541.3 107.8M589.7 123.1L597.3 125.6L597.1 130.1L602.5 136.3L599.9 142.4L596.2 146.1L588.5 145.2L576.6 145.2M599.9 142.4L607.3 143.8L610.7 150.1L617.5 152.3L623.5 153.6L622.4 161.3L618.1 164.3M572.3 158.8L574.6 160.5L580.3 161.8L585.1 159.2L589.1 158.8L594.5 166.8L589.7 170.8L593.9 171.6M585.1 159.2L589.7 170.8M574.6 160.5L570.0 167.6L567.2 168.4L563.2 169.2L556.6 166.8L555.2 165.5M567.2 168.4L570.3 173.6L574.0 176.0L574.9 177.6L582.0 178.4L586.2 176.4L590.8 178.0M574.0 176.0L573.2 183.4L574.9 187.2L579.1 186.5L584.2 185.7L589.1 184.6M584.2 185.7L583.4 189.5M566.3 193.2L569.2 189.1L574.9 187.2M569.2 189.1L567.7 187.2L567.7 183.8L564.6 184.9M567.7 183.8L573.2 183.4M563.2 169.2L563.5 173.2L565.2 176.8L564.0 178.8L562.1 182.6M563.5 173.2L554.9 172.0L554.4 174.0L559.5 180.7L562.1 182.6M548.1 170.8L552.9 170.8L556.6 166.8M627.5 186.5L633.2 188.0L633.8 191.7L636.9 193.2L635.8 197.9L636.9 202.2L630.1 202.6L623.2 203.6L617.5 203.6L613.8 204.0L612.4 206.8L611.6 206.8M623.2 179.2L630.4 179.9L636.0 181.9L641.5 184.9L647.7 185.3M633.2 188.0L637.5 187.2L641.5 184.9M637.5 187.2L641.7 193.9L641.7 196.1M636.9 193.2L641.7 196.1L646.0 193.2L648.6 197.9M636.9 202.2L640.3 207.1L638.6 213.3L645.2 223.4L647.7 226.7M662.8 201.8L668.8 199.0L675.9 200.8L683.6 204.4L683.6 207.9L681.9 213.4L682.7 221.8L685.3 222.2L682.7 227.1L688.1 232.4L689.6 237.2L684.7 242.1M630.1 202.6L626.7 210.6L619.8 215.4L614.1 219.1L611.0 217.8L610.4 221.8L609.0 228.3M611.6 211.3L613.6 212.7L611.3 215.7L609.3 216.4M607.0 222.4L608.7 228.3M619.8 215.4L621.0 219.4L614.7 221.8L617.5 225.1L616.1 226.7L611.9 229.3L609.0 228.7M621.0 219.4L624.4 220.4L629.2 223.1L636.6 229.3L641.7 229.6L645.2 231.6L647.1 231.6M641.7 229.6L644.3 226.4L646.0 226.7M631.2 268.7L632.6 265.5L636.0 265.8L641.7 266.4L644.6 267.0L648.9 262.2L657.4 261.0L665.9 258.0L667.9 251.9L666.2 250.1L659.1 249.2L656.3 245.2M667.9 251.9L668.8 245.8L669.6 243.0M657.4 261.0L660.5 268.1M654.0 243.6L655.1 243.9M649.4 167.2L643.2 160.5L641.7 158.4L644.0 150.5L648.9 148.3L654.0 144.2L664.5 147.4L675.9 147.4L684.4 148.4L683.0 134.0L694.4 131.3L705.8 127.5L711.5 133.0L718.6 134.1L728.0 132.3L737.1 149.5L747.0 148.8L757.9 157.1L752.7 166.3L744.2 173.1L737.9 174.9L737.6 185.1M737.6 185.1L722.9 182.1L718.6 181.6L711.5 184.1L702.9 188.8L698.7 188.0L697.2 181.1L683.0 175.7L675.9 170.4L668.8 172.8L668.8 187.2L665.4 184.9L658.8 185.3M668.8 187.2L676.2 181.9L680.2 185.3L685.9 192.2L693.0 196.4L698.7 201.9L693.3 205.3L688.7 208.7L683.6 207.9M698.7 201.9L702.9 203.4L708.6 201.4L712.9 204.7L722.6 203.2M702.9 203.4L703.8 194.4L710.0 189.4L711.5 184.1M737.6 185.1L728.0 191.7L719.4 194.8L722.6 203.2M719.4 194.8L710.0 192.7L706.6 189.7M722.6 203.2L712.9 207.2L711.5 214.1L706.6 221.0L698.1 227.4L687.3 228.8L682.7 227.1M722.6 203.2L730.8 209.3L728.5 211.0L720.0 214.2L721.4 218.3L723.7 220.1L721.4 224.3L718.3 227.6L714.0 233.9L709.5 233.8L707.2 237.0L711.5 244.9L705.2 245.4L703.5 247.2M730.8 209.3L734.2 213.5L733.9 219.6L733.4 223.0L739.9 227.4L748.5 231.8L754.2 234.8L760.1 235.3L762.4 237.3L764.7 234.4L770.1 235.5L776.9 232.1L782.6 231.0L786.3 234.9M739.9 227.4L737.4 231.9L742.8 234.9L748.5 236.6L760.1 240.1L760.1 235.3M762.4 237.3L765.0 239.2L771.2 238.7L770.1 235.5M760.1 240.1L762.1 243.0L760.4 245.1L762.7 253.2M760.1 240.1L765.0 241.4L765.0 243.6L772.4 244.8L769.0 247.8L770.1 250.9L772.1 248.8L772.9 256.2L772.1 257.7M786.3 234.9L780.3 239.9L778.6 244.9L774.9 247.9L775.2 252.2L772.9 256.2M786.3 234.9L790.3 237.3L790.3 242.6L787.2 247.0L790.9 250.8L792.6 254.5L797.4 255.8L794.3 259.7L788.3 261.3L786.6 264.9L790.0 271.5L788.9 275.3L791.7 282.1L792.9 284.7L790.6 288.7M797.4 255.8L800.0 253.4L802.5 258.3L806.8 259.6L805.4 262.6L808.8 265.4L812.8 271.1L815.6 275.9L815.6 277.7L809.9 277.5L807.7 271.3L805.4 265.9L800.0 266.1L797.4 268.1L797.4 262.1L794.3 259.7M809.9 277.5L802.5 277.9L800.8 279.9L802.3 285.2M815.6 277.7L815.3 283.8L811.1 285.4L806.5 289.0M800.0 253.4L809.1 250.9L813.1 252.5L816.8 256.5M794.3 300.2L797.1 302.3L800.0 300.9M821.3 313.3L823.9 316.5L828.7 315.2L835.3 315.3L839.0 307.2L844.1 307.6M910.7 327.7L910.7 346.2M759.3 157.1L771.2 150.3L788.3 154.3L789.2 145.0L800.3 148.5L800.5 151.8L813.9 154.9L833.8 154.4L841.5 156.4L838.1 164.5L843.5 165.5L850.6 169.8L838.1 174.8L828.2 176.2L827.9 181.3L823.6 185.1L808.2 189.0L796.8 185.3L783.8 184.2L780.9 177.9L768.4 174.0L768.1 167.1L759.3 157.1M841.5 156.4L848.6 154.3L853.2 143.3L861.2 139.0L868.0 142.6L872.3 157.1L881.4 161.2L882.2 166.3L892.8 163.3L887.9 177.3L883.1 177.7L882.2 185.6L881.1 187.5L873.7 188.9L870.6 189.6L863.4 196.2M868.3 204.3L874.8 201.6M486.1 131.0L489.5 133.0L491.5 133.0" fill="none" stroke="#56565f" stroke-width="1.7" stroke-dasharray="2.600 2.400" stroke-opacity="0.9"/>
<g font-family="Liberation Sans, sans-serif" font-size="10.4" fill="#a94442" text-anchor="middle" letter-spacing="0.9" stroke="#fffaff" stroke-width="2.2" stroke-opacity="0.85" paint-order="stroke" stroke-linejoin="round">
<text x="74.7" y="62.7">UNITED</text>
<text x="74.7" y="76.2">STATES</text>
<text x="455.0" y="75.2">ICELAND</text>
<text x="246.2" y="146.7">CANADA</text>
<text x="232.2" y="190.2">UNITED</text>
<text x="232.2" y="202.7">STATES</text>
<text x="220.2" y="254.2">MEXICO</text>
<text x="284.2" y="256.7">CUBA</text>
<text x="252.2" y="275.2">GUATEMALA</text>
<text x="302.7" y="310.7">COLOMBIA</text>
<text x="295.7" y="350.7">PERU</text>
<text x="356.5" y="351.2">BRAZIL</text>
<text x="327.7" y="370.2">BOLIVIA</text>
<text x="341.5" y="388.2">PARAGUAY</text>
<text x="305.7" y="412.7">CHILE</text>
<text x="348.0" y="419.2">URUGUAY</text>
<text x="324.2" y="434.7">ARGENTINA</text>
<text x="585.7" y="75.0">FINLAND</text>
<text x="534.0" y="97.1">NORWAY</text>
<text x="580.5" y="114.0">ESTONIA</text>
<text x="535.7" y="152.9">GERMANY</text>
<text x="548.5" y="166.3">AUSTRIA</text>
<text x="597.3" y="161.1">UKRAINE</text>
<text x="542.0" y="186.7">ITALY</text>
<text x="568.8" y="200.7">GREECE</text>
<text x="535.0" y="217.5">TUNISIA</text>
<text x="617.7" y="214.6">SYRIA</text>
<text x="560.5" y="241.3">LIBYA</text>
<text x="595.5" y="241.3">EGYPT</text>
<text x="639.0" y="247.7">SAUDI</text>
<text x="639.0" y="260.5">ARABIA</text>
<text x="643.0" y="275.7">YEMEN</text>
<text x="661.9" y="222.7">IRAN</text>
<text x="705.0" y="232.0">PAKISTAN</text>
<text x="699.0" y="164.6">KAZAKHSTAN</text>
<text x="687.4" y="189.6">UZBEKISTAN</text>
<text x="782.8" y="88.4">RUSSIAN</text>
<text x="782.8" y="101.7">FEDERATION</text>
<text x="800.8" y="170.4">MONGOLIA</text>
<text x="793.8" y="218.0">CHINA</text>
<text x="868.3" y="190.7">NORTH</text>
<text x="868.3" y="204.7">KOREA</text>
<text x="729.9" y="255.8">INDIA</text>
<text x="783.4" y="259.9">MYANMAR</text>
<text x="795.6" y="277.4">THAILAND</text>
<text x="857.2" y="287.2">PHILIPPINES</text>
<text x="798.5" y="308.2">MALAYSIA</text>
<text x="825.8" y="334.9">INDONESIA</text>
<text x="918.8" y="332.0">PAPUA NEW</text>
<text x="918.8" y="345.4">GUINEA</text>
<text x="885.7" y="393.7">AUSTRALIA</text>
<text x="534.5" y="273.9">NIGER</text>
<text x="593.3" y="275.0">SUDAN</text>
<text x="530.5" y="293.7">NIGERIA</text>
<text x="594.4" y="294.2">SOUTH</text>
<text x="594.4" y="307.0">SUDAN</text>
<text x="543.3" y="307.0">CAMEROON</text>
<text x="638.0" y="308.2">SOMALIA</text>
<text x="557.8" y="357.0">ANGOLA</text>
<text x="592.7" y="376.2">ZIMBABWE</text>
<text x="556.6" y="389.0">NAMIBIA</text>
<text x="468.0" y="279.1">SENEGAL</text>
</g>
<g font-family="Liberation Sans, sans-serif" font-size="9.800" fill="#6d8dba" text-anchor="middle" letter-spacing="0.2">
<text x="411.5" y="174.8">North Atlantic</text>
<text x="411.5" y="185.8">Ocean</text>
<text x="136.5" y="418.3">South Pacific</text>
<text x="136.5" y="428.3">Ocean</text>
<text x="453.5" y="418.3">South Atlantic</text>
<text x="453.5" y="428.3">Ocean</text>
<text x="750.2" y="379.3">Indian Ocean</text>
</g>
</svg>
<svg class="a" style="left:0;top:496px" width="1003" height="482" viewBox="0 496 1003 482" font-family="Liberation Sans, sans-serif" font-weight="bold" fill="#111">
<rect x="81.5" y="594.5" width="15" height="15" fill="#f8c070" stroke="#8a7a60"/><text x="84" y="607" font-size="13">D</text>
<circle cx="81.3" cy="593.6" r="14" fill="#d6ecb0" fill-opacity="0.75" stroke="#c4e49a" stroke-width="1.5"/>
<text x="67.500" y="598" font-size="11.6">P (2)</text>
<circle cx="158.6" cy="654.2" r="13" fill="#fbd49a" fill-opacity="0.8" stroke="#f6c48a" stroke-width="1.5"/>
<circle cx="157.5" cy="653.4" r="33.5" fill="#d2eaa8" fill-opacity="0.6" stroke="#c6e69c" stroke-width="1.5"/>
<text x="149" y="658.5" font-size="11.5">D (3)</text>
<text x="141" y="659" font-size="15.5">P (9)</text>
<circle cx="231.2" cy="650.7" r="29.3" fill="#fbd08e" fill-opacity="0.8" stroke="#f8c078" stroke-width="1.5"/>
<text x="215.500" y="656" font-size="14.600">D (2)</text>
<circle cx="170.3" cy="712.6" r="14" fill="#fbd49a" fill-opacity="0.8" stroke="#f6c890" stroke-width="1.2"/>
<circle cx="170.3" cy="712.6" r="14" fill="#cfe8a4" fill-opacity="0.7"/>
<text x="159.500" y="716.800" font-size="11.400">P (2)</text><text x="160" y="716.800" font-size="11.400">P (3)</text>
<rect x="305.5" y="682.5" width="15" height="15" fill="#f8c070" stroke="#8a7a60"/><text x="308" y="695" font-size="13">D</text>
<circle cx="305" cy="681.5" r="14" fill="#d6ecb0" fill-opacity="0.75" stroke="#c4e49a" stroke-width="1.5"/>
<text x="293.500" y="686.500" font-size="11.6">P (2)</text>
<rect x="242.5" y="678.5" width="15" height="15" fill="#d4e8b0" stroke="#7a7a6a"/><text x="250" y="690.7" font-size="13.500" text-anchor="middle" stroke="#111" stroke-width="0.35">P</text>
<rect x="597.5" y="726.5" width="15" height="15" fill="#f9c37c" stroke="#7a7a6a"/><text x="605" y="738.7" font-size="13.500" text-anchor="middle" stroke="#111" stroke-width="0.35">D</text>
<rect x="799.1" y="658.1" width="15" height="15" fill="#d4e8b0" stroke="#7a7a6a"/><text x="806.6" y="670.3000000000001" font-size="13.500" text-anchor="middle" stroke="#111" stroke-width="0.35">P</text>
<rect x="921.2" y="933.1" width="15" height="15" fill="#f9c37c" stroke="#7a7a6a"/><text x="928.7" y="945.3000000000001" font-size="13.500" text-anchor="middle" stroke="#111" stroke-width="0.35">D</text>
<path d="M947.5 970V978" stroke="#111" stroke-width="1.5"/><text x="957" y="981" font-size="9" font-weight="normal">2000 km</text>
</svg>
<svg class="a" style="left:0;top:500px" width="40" height="62"><path d="M19 4.5a8.5 8.5 0 0 1 8.5 8.5v9h1a8.5 8.5 0 0 1 0 17.5h-1v9a8.5 8.5 0 0 1 -17 0v-9h-1a8.5 8.5 0 0 1 0 -17.5h1v-9a8.5 8.5 0 0 1 8.5 -8.5z" fill="#fdfcff" stroke="#b9b39a" stroke-width="1.2"/><g fill="#6a6480"><path d="M19 10.5l3 5h-6z"/><path d="M19 51l3 -5h-6z"/><path d="M7 30.7l5 -3v6z"/><path d="M31 30.7l-5 -3v6z"/></g></svg>
<div class="a" style="left:17px;top:580px;width:4px;height:232px;background:#e9f1fe"></div>
<svg class="a" style="left:9px;top:562px" width="20" height="20"><circle cx="10" cy="10" r="8" fill="#fdfcff" stroke="#b9b39a" stroke-width="1.2"/><path d="M5.5 10h9M10 5.5v9" stroke="#7a7a8a" stroke-width="1.3"/></svg>
<svg class="a" style="left:9px;top:810px" width="20" height="20"><circle cx="10" cy="10" r="8" fill="#fdfcff" stroke="#b9b39a" stroke-width="1.2"/><path d="M5.5 10h9" stroke="#7a7a8a" stroke-width="1.3"/></svg>
<div class="a" style="left:10px;top:780px;width:18px;height:6px;box-sizing:border-box;background:#fdfcff;border:1px solid #b9b39a;border-radius:2px"></div>
<div class="a" style="left:55px;top:504px;width:164px;height:44px;box-sizing:border-box;background:#fefeff;border:1px solid #74748c;border-radius:5px"></div>
<svg class="a" style="left:66px;top:513px" width="24" height="26" viewBox="0 0 24 26"><path d="M7.5 13V6.5a1.4 1.4 0 0 1 2.8 0V4.6a1.4 1.4 0 0 1 2.8 0v1.2a1.4 1.4 0 0 1 2.8 0v2a1.3 1.3 0 0 1 2.6 0v8.5c0 3.8-2.2 6.5-6 6.5-3 0-4.4-1.2-6-4l-2.8-4.6c-.8-1.5 1-2.6 2.1-1.4z" fill="#fbdcae" stroke="#e07a2c" stroke-width="1.3" stroke-linejoin="round"/><path d="M10.3 7v5M13.1 6v6M15.9 8v4.5" stroke="#e6904a" stroke-width="1"/></svg>
<svg class="a" style="left:104px;top:514px" width="26" height="24" viewBox="0 0 26 24"><rect x="2.5" y="3" width="14" height="11" fill="#b9ccf3"/><path d="M2 6V2.5h4M13 2.5h4V6M2 11v3.5h4" stroke="#3564ad" stroke-width="1.4" fill="none"/><circle cx="14.3" cy="12.6" r="3.6" fill="#dfe9fb" stroke="#31599f" stroke-width="1.8"/><path d="M12.6 12.6h3.4M14.3 10.9v3.4" stroke="#31599f" stroke-width="1"/><path d="M17 15.5l5 4.5" stroke="#31599f" stroke-width="2.4" stroke-linecap="round"/></svg>
<svg class="a" style="left:145px;top:515px" width="22" height="22" viewBox="0 0 22 22"><path d="M19 11H4M10.5 4L3.5 11l7 7" stroke="#3a62a9" stroke-width="3.2" fill="none" stroke-linecap="round" stroke-linejoin="round"/></svg>
<svg class="a" style="left:183px;top:515px" width="22" height="22" viewBox="0 0 22 22"><path d="M3 11h15M11.5 4l7 7-7 7" stroke="#cfd3f1" stroke-width="3.2" fill="none" stroke-linecap="round" stroke-linejoin="round"/></svg>
</div>
</body></html>
